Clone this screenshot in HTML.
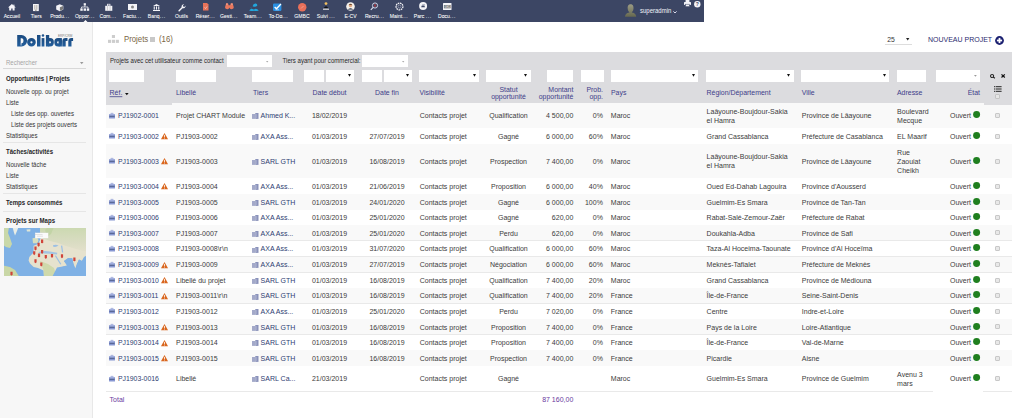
<!DOCTYPE html>
<html><head><meta charset="utf-8"><title>Projets</title>
<style>
html,body{margin:0;padding:0}
body{width:1024px;height:418px;overflow:hidden;position:relative;background:#fff;font-family:"Liberation Sans", sans-serif}
.t{position:absolute;white-space:nowrap;transform:scaleY(1.12)}
svg{overflow:visible}
</style></head><body>
<div style="position:absolute;left:0.00px;top:0.00px;width:704.00px;height:21.50px;background:#3c4664"></div>
<svg style="position:absolute;left:7.80px;top:4.20px" width="7.8" height="6.6" viewBox="0 0 7.8 6.6"><path d="M3.9 0 L7.8 3.4 L6.6 3.4 L6.6 6.6 L4.6 6.6 L4.6 4.6 L3.2 4.6 L3.2 6.6 L1.2 6.6 L1.2 3.4 L0 3.4 Z" fill="#f4f4f8"/><rect x="5.4" y="0.6" width="1" height="1.8" fill="#f4f4f8"/></svg>
<svg style="position:absolute;left:32.90px;top:3.70px" width="5.8" height="7.1" viewBox="0 0 5.8 7.1"><rect x="0" y="0" width="5.8" height="7.1" fill="#f4f4f8"/><rect x="1.6" y="1.0" width="0.6" height="4.6" fill="#8a8070"/><rect x="3.6" y="1.0" width="0.6" height="4.6" fill="#8a8070"/><rect x="2.4" y="5.6" width="1" height="1.5" fill="#8a8070"/></svg>
<svg style="position:absolute;left:56.30px;top:3.60px" width="7.5" height="7.5" viewBox="0 0 7.5 7.5"><path d="M3.75 0.2 L7.3 1.8 L7.3 5.6 L3.75 7.3 L0.2 5.6 L0.2 1.8 Z" fill="#f4f4f8"/><path d="M3.9 3.2 L7 2 L7 5.4 L3.9 6.8Z" fill="#7a7a7a"/></svg>
<svg style="position:absolute;left:80.00px;top:3.20px" width="9.5" height="8" viewBox="0 0 9.5 8"><rect x="3.7" y="0.2" width="2.2" height="2.3" fill="#f4f4f8"/><rect x="0.3" y="5.4" width="2.4" height="2.4" fill="#f4f4f8"/><rect x="3.6" y="5.4" width="2.4" height="2.4" fill="#f4f4f8"/><rect x="6.8" y="5.4" width="2.4" height="2.4" fill="#f4f4f8"/><path d="M4.8 2.5 V4 M1.5 5.4 V4 H8 V5.4" stroke="#f4f4f8" stroke-width="0.8" fill="none"/></svg>
<svg style="position:absolute;left:104.50px;top:3.60px" width="7.5" height="7" viewBox="0 0 7.5 7"><rect x="0.2" y="1.8" width="7.1" height="5" fill="#f4f4f8"/><rect x="2.5" y="0.2" width="2.5" height="1.8" fill="none" stroke="#f4f4f8" stroke-width="0.7"/><rect x="2.2" y="2" width="0.5" height="4.5" fill="#aaa"/><rect x="4.8" y="2" width="0.5" height="4.5" fill="#aaa"/></svg>
<svg style="position:absolute;left:128.30px;top:4.00px" width="9" height="6" viewBox="0 0 9 6"><rect x="0" y="0" width="9" height="6" fill="#f4f4f8"/><circle cx="4.5" cy="3" r="1.5" fill="#888"/></svg>
<svg style="position:absolute;left:153.30px;top:3.80px" width="7" height="7" viewBox="0 0 7 7"><path d="M3.5 0 L7 2 L0 2Z" fill="#f4f4f8"/><rect x="0.7" y="2.4" width="1.1" height="3.2" fill="#f4f4f8"/><rect x="2.95" y="2.4" width="1.1" height="3.2" fill="#f4f4f8"/><rect x="5.2" y="2.4" width="1.1" height="3.2" fill="#f4f4f8"/><rect x="0" y="6" width="7" height="1" fill="#f4f4f8"/></svg>
<svg style="position:absolute;left:177.50px;top:3.50px" width="8" height="8" viewBox="0 0 8 8"><path d="M7.6 1.6 A2.4 2.4 0 0 1 4.6 4.2 L1.4 7.4 A0.8 0.8 0 0 1 0.4 6.4 L3.6 3.2 A2.4 2.4 0 0 1 6.2 0.2 L4.9 1.5 L5.2 2.6 L6.3 2.9 Z" fill="#f4f4f8"/></svg>
<svg style="position:absolute;left:202.50px;top:3.00px" width="5.5" height="7.5" viewBox="0 0 5.5 7.5"><path d="M0 0 H4 L5.5 1.5 V7.5 H0Z" fill="#e8735a"/><path d="M1.5 4.5 L2.5 5.5 L4 3.5" stroke="#fff" stroke-width="0.5" fill="none"/></svg>
<svg style="position:absolute;left:224.90px;top:2.90px" width="8.8" height="6.6" viewBox="0 0 8.8 6.6"><path d="M1.2 0.3 L3 0.3 L3.6 2.2 H5.2 L5.8 0.3 H7.6 L8.8 4.2 A2.3 2.3 0 0 1 4.9 5.6 L4.4 4.4 L3.9 5.6 A2.3 2.3 0 0 1 0 4.2Z" fill="#e8785e"/><path d="M1.3 0.6 h1.2 v1.2 h-1.2Z M6.3 0.6 h1.2 v1.2 h-1.2Z" fill="#f2b0a0"/></svg>
<svg style="position:absolute;left:249.10px;top:2.60px" width="10" height="8.4" viewBox="0 0 10 8.4"><path d="M3.6 3.2 Q4.2 0.2 6.6 0.4 Q8.6 0.6 8.2 2.8 Q6.4 4.6 3.6 3.2Z" fill="#22a6dc"/><path d="M0.2 7.4 Q1.8 5 4.2 6.2 Q5 6.6 5 6.6 Q7.2 4.8 9.8 7.4 Q7 8.6 5 7.8 Q3 8.6 0.2 7.4Z" fill="#22a6dc"/><path d="M1.5 4.5 L3 5.5" stroke="#1a7fb0" stroke-width="0.5"/></svg>
<svg style="position:absolute;left:273.20px;top:3.10px" width="8.8" height="8" viewBox="0 0 8.8 8"><rect x="0" y="0.4" width="8.4" height="7.6" rx="1.2" fill="#2a90e2"/><path d="M1.6 4.0 L3.5 5.8 L7.9 1.0" stroke="#fff" stroke-width="1.3" fill="none"/><rect x="2.4" y="6.5" width="3.6" height="0.7" fill="#d8e8f8"/></svg>
<svg style="position:absolute;left:298.00px;top:3.00px" width="8.5" height="8.5" viewBox="0 0 8.5 8.5"><circle cx="4.25" cy="4.25" r="4.2" fill="#e8705a"/><path d="M3 5.5 L5.5 3" stroke="#f7c0b0" stroke-width="0.6"/></svg>
<svg style="position:absolute;left:322.50px;top:2.20px" width="6" height="8" viewBox="0 0 6 8"><circle cx="3" cy="1.6" r="1.4" fill="#f2c060"/><path d="M0.8 6 Q3 2.5 5.2 6Z" fill="#111"/><rect x="0" y="6.6" width="6" height="1.3" fill="#ccc"/></svg>
<svg style="position:absolute;left:346.00px;top:1.80px" width="9" height="9" viewBox="0 0 9 9"><circle cx="4.5" cy="4.5" r="4.3" fill="#f4f0ea"/><circle cx="4.5" cy="3.6" r="1.7" fill="#e0a880"/><path d="M2.7 3 Q4.5 0.6 6.3 3" fill="#6b4a30"/><path d="M1.6 7.8 Q4.5 4.4 7.4 7.8Z" fill="#5a6070"/></svg>
<svg style="position:absolute;left:370.30px;top:1.80px" width="8.5" height="8.5" viewBox="0 0 8.5 8.5"><circle cx="5" cy="3.5" r="2.6" fill="none" stroke="#dde" stroke-width="0.9"/><rect x="4.4" y="2.3" width="1.2" height="2.4" fill="#c33"/><path d="M3.2 5.3 L0.8 7.8" stroke="#dde" stroke-width="1.1"/></svg>
<svg style="position:absolute;left:394.50px;top:2.40px" width="9" height="9" viewBox="0 0 9 9"><circle cx="4.5" cy="4.5" r="3.4" fill="none" stroke="#f4f4f8" stroke-width="1.3" stroke-dasharray="1.6 0.7"/><circle cx="4.5" cy="4.5" r="1.5" fill="none" stroke="#ccd" stroke-width="0.5"/></svg>
<svg style="position:absolute;left:418.90px;top:2.10px" width="8.2" height="8.2" viewBox="0 0 8.2 8.2"><circle cx="4.1" cy="4.1" r="4.0" fill="#f4f4f8"/><path d="M2.2 5.2 L2.8 3.4 H5.4 L6 5.2Z" fill="#3c4664"/><rect x="3.2" y="2.5" width="2.8" height="0.6" fill="#7a8098"/></svg>
<svg style="position:absolute;left:442.50px;top:3.00px" width="8.5" height="7" viewBox="0 0 8.5 7"><rect x="0" y="0" width="8.5" height="7" rx="0.6" fill="#f4f4f8"/><rect x="0.9" y="2" width="6.7" height="3.3" fill="#666"/><text x="4.25" y="4.8" font-size="2.8" text-anchor="middle" fill="#fff" font-family="Liberation Sans">GED</text></svg>
<svg style="position:absolute;left:82.50px;top:19.50px" width="5" height="2.5" viewBox="0 0 5 2.5"><path d="M0 2.5 L2.5 0 L5 2.5Z" fill="#fff"/></svg>
<svg style="position:absolute;left:625.20px;top:3.60px" width="11.2" height="13" viewBox="0 0 11.2 13"><defs><linearGradient id="ug" x1="0" y1="0" x2="0" y2="1"><stop offset="0" stop-color="#9c9c84"/><stop offset="1" stop-color="#66684f"/></linearGradient></defs><path d="M5.6 0.2 C8.2 0.2 8.6 2.5 8.5 4.6 C8.4 6.8 7.4 7.8 6.8 8.2 L6.8 8.6 C10 9.2 11 10.6 11.2 12.8 H0 C0.2 10.6 1.2 9.2 4.4 8.6 L4.4 8.2 C3.8 7.8 2.8 6.8 2.7 4.6 C2.6 2.5 3 0.2 5.6 0.2Z" fill="url(#ug)"/></svg>
<svg style="position:absolute;left:673.00px;top:10.60px" width="4" height="3" viewBox="0 0 4 3"><path d="M0.4 0.4 L2 2 L3.6 0.4" stroke="#eef" stroke-width="0.9" fill="none"/></svg>
<svg style="position:absolute;left:683.80px;top:0.20px" width="7" height="6.8" viewBox="0 0 7 6.8"><rect x="1.6" y="0" width="3.8" height="2" fill="#f4f4f8"/><rect x="0" y="2" width="7" height="2.9" rx="0.6" fill="#f4f4f8"/><rect x="1.6" y="4.2" width="3.8" height="2.4" fill="#f4f4f8" stroke="#3c4664" stroke-width="0.5"/></svg>
<svg style="position:absolute;left:693.60px;top:0.60px" width="6.6" height="6.6" viewBox="0 0 6.6 6.6"><circle cx="3.3" cy="3.3" r="3.2" fill="#f4f4f8"/><text x="3.3" y="5.3" font-size="5" font-weight="bold" text-anchor="middle" fill="#3c4664" font-family="Liberation Sans">?</text></svg>
<div style="position:absolute;left:0.00px;top:21.50px;width:92.00px;height:396.50px;background:#f7f7f7;border-right:1px solid #e8e8e8"></div>
<svg style="position:absolute;left:16.8px;top:34.8px" width="56.2" height="11.5" viewBox="0 0 56.2 11.5"><defs><linearGradient id="lg" x1="0" y1="0" x2="0" y2="1"><stop offset="0" stop-color="#1b4b80"/><stop offset="1" stop-color="#235e9c"/></linearGradient></defs><g fill="url(#lg)" fill-rule="evenodd"><path d="M0.2 0 H4.5 A5.6 5.75 0 0 1 4.5 11.5 H0.2Z M3.7 3.2 H5 A1.5 2.5 0 0 1 5 8.2 H3.7Z"/><path d="M10.1 7.3 A4.35 4.2 0 1 0 18.8 7.3 A4.35 4.2 0 1 0 10.1 7.3Z M13.35 7.3 A1.1 1.1 0 1 0 15.55 7.3 A1.1 1.1 0 1 0 13.35 7.3Z"/><rect x="20" y="0" width="3.5" height="11.5"/><rect x="24.6" y="3.1" width="2.8" height="8.4"/><circle cx="26" cy="0.5" r="1.25"/><rect x="28.9" y="0" width="3.3" height="11.5"/><path d="M28.9 7.3 A4 4.2 0 1 0 36.9 7.3 A4 4.2 0 1 0 28.9 7.3Z M31.8 7.3 A1.1 1.1 0 1 0 34 7.3 A1.1 1.1 0 1 0 31.8 7.3Z"/><path d="M37.3 7.3 A3.8 4.2 0 1 0 44.9 7.3 A3.8 4.2 0 1 0 37.3 7.3Z M40.1 7.4 A1.1 1.1 0 1 0 42.3 7.4 A1.1 1.1 0 1 0 40.1 7.4Z"/><rect x="41.6" y="3.1" width="3.3" height="8.4"/><path d="M45.3 11.5 V6.5 Q45.3 3.1 48.7 3.1 H50.5 V6 H48.7 V11.5Z"/><path d="M51.3 11.5 V6.5 Q51.3 3.1 54.5 3.1 H56.1 V6 H54.5 V11.5Z"/></g><rect x="3.7" y="7.9" width="0.7" height="2.6" fill="#f6f6f6"/></svg>
<svg style="position:absolute;left:58.2px;top:33.6px" width="15" height="2.8" viewBox="0 0 15 2.8"><text x="0" y="2.6" font-size="3.1" fill="#7a7a7a" font-family="Liberation Sans" textLength="14.5" lengthAdjust="spacingAndGlyphs">ERP/CRM</text></svg>
<svg style="position:absolute;left:79.90px;top:62.00px" width="3.5" height="2.4" viewBox="0 0 3.5 2.4"><path d="M0 0 H3.5 L1.75 2.2Z" fill="#999"/></svg>
<div style="position:absolute;left:3.00px;top:68.30px;width:83.00px;height:0.60px;background:#d8d8d8"></div>
<div style="position:absolute;left:3.00px;top:142.30px;width:83.00px;height:0.70px;background:#e6e6e6"></div>
<div style="position:absolute;left:3.00px;top:193.00px;width:83.00px;height:0.70px;background:#e6e6e6"></div>
<div style="position:absolute;left:3.00px;top:211.30px;width:83.00px;height:0.70px;background:#e6e6e6"></div>
<svg style="position:absolute;left:3.5px;top:228.2px;overflow:hidden" width="82.5" height="48.2" viewBox="0 0 82.5 48.2">
<defs><filter id="mb" x="-5%" y="-5%" width="110%" height="110%"><feGaussianBlur stdDeviation="0.35"/></filter>
<linearGradient id="eu" x1="0" y1="0" x2="0" y2="1"><stop offset="0" stop-color="#cbd9b0"/><stop offset="0.6" stop-color="#d9dcc2"/><stop offset="1" stop-color="#e4e0cc"/></linearGradient></defs>
<g filter="url(#mb)">
<rect x="-1" y="-1" width="84.5" height="50.2" fill="#7fb1e5"/>
<path d="M-1 -1 H5 L4 5 L6 10 L8 16 L6 20 L2 19 L-1 17Z" fill="#c9d8aa"/>
<path d="M8.5 -1 H14.5 L13 3 L11 7.5 L9.8 4Z" fill="#e9ede6"/>
<path d="M22.5 1.5 L26.5 1.3 L26.2 3.4 L23 3.4Z" fill="#dfe6d6"/>
<path d="M-1 37.6 L6 39 L11 42 L15.5 49.2 H-1Z" fill="#c9d7a6"/>
<path d="M28.5 10.2 L33 9.5 L34.6 12 L33.5 15.2 L29 15.2Z" fill="#d6dfbf"/>
<path d="M36 -1 H83.5 V27 L80 29 L78 33 L75 31.5 L73 36 L71.3 40.7 L69.5 36 L68.2 30.2 L64 30 L60 33 L63.2 37.6 L58 39 L53 49.2 H40 L39.6 42.6 L34 40 L29.6 38.9 L26 35.5 L24.6 32.6 L25.3 29 L29.5 24.6 L29.6 17.7 L34 16 L36 12 L37 8 L36 3Z" fill="#e6e2ce"/>
<path d="M36 -1 H83.5 V24 L72 21 L62 18 L54 15 L46 13 L38 10 L36 3Z" fill="url(#eu)"/>
<path d="M36 33 L44 36 L50 40 L53 49.2 H40 L39.6 42.6Z" fill="#cfd9ab"/>
<path d="M41 2 L44 -1 H50 L47 6 L43 9Z" fill="#c2d4a6"/>
<path d="M34.6 24 Q40 22.5 46 23.5 L53.3 24.8 L53 26.5 L46 25.8 Q40 25.3 35 25.3Z" fill="#a4c4e2"/>
<path d="M49 17.2 Q52 16 54.5 17.5 Q52 19.6 49 18.6Z" fill="#9cc0e4"/>
<path d="M57 17.7 L58.2 17.5 L59.2 24.6 L58 24.5Z" fill="#9cc0e4"/>
<path d="M50.8 27.7 L52 27.5 L57.3 36 L56.3 36.6Z" fill="#9cc0e4"/>
<path d="M48 49.2 L53 39.5 L58.5 38.5 L63.2 37.6 L60 33 L64 30.5 L68.2 30.2 L69.5 36 L71.3 40.7 L73 36 L75 31.5 L78 33 L80 30 L83.5 30 V49.2Z" fill="#7fb1e5"/>
</g>
<rect x="31.1" y="4.9" width="13.1" height="5.3" fill="#fbfbfb" stroke="#ddd" stroke-width="0.2"/>
<path d="M30.5 6.5 h8 M33 8.2 h6" stroke="#bbb" stroke-width="0.4"/>
<g fill="#d0443a">
<path d="M37.0 11.4 h2.2 v2.9 l-1.1 1.1 l-1.1 -1.1Z"/>
<path d="M33.5 14.8 h2.2 v2.9 l-1.1 1.1 l-1.1 -1.1Z"/>
<path d="M30.4 18.6 h2.2 v2.9 l-1.1 1.1 l-1.1 -1.1Z"/>
<path d="M29.1 23.2 h2.2 v2.9 l-1.1 1.1 l-1.1 -1.1Z"/>
<path d="M37.0 21.9 h2.2 v2.9 l-1.1 1.1 l-1.1 -1.1Z"/>
<path d="M33.9 25.4 h2.2 v2.9 l-1.1 1.1 l-1.1 -1.1Z"/>
<path d="M40.7 26.9 h2.2 v2.9 l-1.1 1.1 l-1.1 -1.1Z"/>
<path d="M46.9 25.9 h2.2 v2.9 l-1.1 1.1 l-1.1 -1.1Z"/>
<path d="M56.9 26.3 h2.2 v2.9 l-1.1 1.1 l-1.1 -1.1Z"/>
<path d="M69.3 29.4 h2.2 v2.9 l-1.1 1.1 l-1.1 -1.1Z"/>
<path d="M30.4 31.3 h2.2 v2.9 l-1.1 1.1 l-1.1 -1.1Z"/>
<path d="M36.2 34.6 h2.2 v2.9 l-1.1 1.1 l-1.1 -1.1Z"/>
<path d="M6.4 43.7 h2.2 v2.9 l-1.1 1.1 l-1.1 -1.1Z"/>
</g></svg>
<svg style="position:absolute;left:107.80px;top:35.00px" width="11" height="8" viewBox="0 0 11 8"><g fill="#cdcdcd"><rect x="3.9" y="0" width="3.1" height="3"/><rect x="0" y="4.8" width="3.1" height="3.1"/><rect x="3.9" y="4.8" width="3.1" height="3.1"/><rect x="7.8" y="4.8" width="3.1" height="3.1"/></g></svg>
<div style="position:absolute;left:150.20px;top:37.20px;width:4.50px;height:4.60px;background:#c8c8c8"></div>
<svg style="position:absolute;left:905.70px;top:37.60px" width="4" height="3" viewBox="0 0 4 3"><path d="M0 0 H3.4 L1.7 2.6Z" fill="#222"/></svg>
<div style="position:absolute;left:885.00px;top:44.20px;width:27.00px;height:0.50px;background:#ddd"></div>
<svg style="position:absolute;left:995.40px;top:35.60px" width="9" height="9" viewBox="0 0 9 9"><circle cx="4.5" cy="4.5" r="4.4" fill="#1a1f70"/><rect x="1.9" y="3.6" width="5.2" height="1.8" fill="#fff"/><rect x="3.6" y="1.9" width="1.8" height="5.2" fill="#fff"/></svg>
<div style="position:absolute;left:105.80px;top:52.00px;width:906.20px;height:51.40px;background:#dcdcdf"></div>
<div style="position:absolute;left:226.70px;top:55.40px;width:45.50px;height:11.70px;background:#fff"></div>
<svg style="position:absolute;left:266.00px;top:60.80px" width="3" height="2" viewBox="0 0 3 2"><path d="M0 0 H2.4 L1.2 1.4Z" fill="#aaa"/></svg>
<div style="position:absolute;left:361.90px;top:55.40px;width:46.00px;height:11.70px;background:#fff"></div>
<svg style="position:absolute;left:402.00px;top:60.80px" width="3" height="2" viewBox="0 0 3 2"><path d="M0 0 H2.4 L1.2 1.4Z" fill="#aaa"/></svg>
<div style="position:absolute;left:109.00px;top:70.00px;width:35.00px;height:11.60px;background:#fff"></div>
<div style="position:absolute;left:176.00px;top:70.00px;width:40.00px;height:11.60px;background:#fff"></div>
<div style="position:absolute;left:252.30px;top:70.00px;width:41.00px;height:11.60px;background:#fff"></div>
<div style="position:absolute;left:304.00px;top:70.00px;width:19.80px;height:11.60px;background:#fff"></div>
<div style="position:absolute;left:325.70px;top:70.00px;width:28.30px;height:11.60px;background:#fff"></div>
<svg style="position:absolute;left:347.80px;top:74.00px" width="4" height="3.2" viewBox="0 0 4 3.2"><path d="M0 0 H3 L1.5 2.8Z" fill="#111"/></svg>
<div style="position:absolute;left:361.90px;top:70.00px;width:19.90px;height:11.60px;background:#fff"></div>
<div style="position:absolute;left:383.50px;top:70.00px;width:28.50px;height:11.60px;background:#fff"></div>
<svg style="position:absolute;left:405.80px;top:74.00px" width="4" height="3.2" viewBox="0 0 4 3.2"><path d="M0 0 H3 L1.5 2.8Z" fill="#111"/></svg>
<div style="position:absolute;left:418.90px;top:70.00px;width:60.10px;height:11.60px;background:#fff"></div>
<svg style="position:absolute;left:472.80px;top:74.00px" width="4" height="3.2" viewBox="0 0 4 3.2"><path d="M0 0 H3 L1.5 2.8Z" fill="#111"/></svg>
<div style="position:absolute;left:486.00px;top:70.00px;width:44.60px;height:11.60px;background:#fff"></div>
<svg style="position:absolute;left:524.40px;top:74.00px" width="4" height="3.2" viewBox="0 0 4 3.2"><path d="M0 0 H3 L1.5 2.8Z" fill="#111"/></svg>
<div style="position:absolute;left:547.00px;top:70.00px;width:26.40px;height:11.60px;background:#fff"></div>
<div style="position:absolute;left:580.80px;top:70.00px;width:23.10px;height:11.60px;background:#fff"></div>
<div style="position:absolute;left:610.50px;top:70.00px;width:87.50px;height:11.60px;background:#fff"></div>
<svg style="position:absolute;left:691.80px;top:74.00px" width="4" height="3.2" viewBox="0 0 4 3.2"><path d="M0 0 H3 L1.5 2.8Z" fill="#111"/></svg>
<div style="position:absolute;left:706.00px;top:70.00px;width:87.50px;height:11.60px;background:#fff"></div>
<svg style="position:absolute;left:787.30px;top:74.00px" width="4" height="3.2" viewBox="0 0 4 3.2"><path d="M0 0 H3 L1.5 2.8Z" fill="#111"/></svg>
<div style="position:absolute;left:801.00px;top:70.00px;width:88.00px;height:11.60px;background:#fff"></div>
<svg style="position:absolute;left:882.80px;top:74.00px" width="4" height="3.2" viewBox="0 0 4 3.2"><path d="M0 0 H3 L1.5 2.8Z" fill="#111"/></svg>
<div style="position:absolute;left:896.80px;top:70.00px;width:28.80px;height:11.60px;background:#fff"></div>
<div style="position:absolute;left:936.00px;top:70.00px;width:44.00px;height:11.60px;background:#fff"></div>
<svg style="position:absolute;left:974.00px;top:75.10px" width="3" height="2" viewBox="0 0 3 2"><path d="M0 0 H2.8 L1.4 1.8Z" fill="#999"/></svg>
<svg style="position:absolute;left:990.10px;top:73.60px" width="5.4" height="4.4" viewBox="0 0 5.4 4.4"><circle cx="2.1" cy="2.0" r="1.55" fill="none" stroke="#222" stroke-width="1.05"/><path d="M3.2 3.0 L4.9 4.3" stroke="#222" stroke-width="1.1"/></svg>
<svg style="position:absolute;left:1001.10px;top:74.00px" width="4.3" height="3.9" viewBox="0 0 4.3 3.9"><path d="M0.5 0.4 L3.8 3.5 M3.8 0.4 L0.5 3.5" stroke="#111" stroke-width="1.25"/></svg>
<svg style="position:absolute;left:124.50px;top:92.50px" width="4" height="2.5" viewBox="0 0 4 2.5"><path d="M0 0 H3.6 L1.8 2.2Z" fill="#111"/></svg>
<svg style="position:absolute;left:993.50px;top:86.10px" width="7.6" height="6" viewBox="0 0 7.6 6"><g fill="#222"><rect x="0" y="0.2" width="1" height="1"/><rect x="0" y="2.5" width="1" height="1"/><rect x="0" y="4.8" width="1" height="1"/><rect x="1.6" y="0.2" width="6" height="1"/><rect x="1.6" y="2.5" width="6" height="1"/><rect x="1.6" y="4.8" width="6" height="1"/></g></svg>
<div style="position:absolute;left:995.40px;top:94.40px;width:4.60px;height:5.00px;background:#e6e6e6;border:0.7px solid #c4c4c4;box-sizing:border-box;border-radius:1px"></div>
<div style="position:absolute;left:105.80px;top:103.40px;width:906.20px;height:24.70px;background:#f9f9f9"></div>
<div style="position:absolute;left:105.80px;top:127.60px;width:906.20px;height:1.00px;background:#e9e9e9"></div>
<svg style="position:absolute;left:109.10px;top:112.77px" width="6" height="5.6" viewBox="0 0 6 5.6"><rect x="0" y="1.1" width="6" height="4.5" rx="0.5" fill="#8797d2"/><rect x="2" y="0.2" width="2" height="1.2" fill="none" stroke="#8797d2" stroke-width="0.6"/><rect x="0.4" y="2.8" width="5.2" height="0.8" fill="#3c4c72"/><rect x="0.4" y="1.6" width="5.2" height="0.6" fill="#c8d2f0"/></svg>
<svg style="position:absolute;left:252.40px;top:113.47px" width="6.6" height="5.9" viewBox="0 0 6.6 5.9"><rect x="0" y="1.0" width="3.1" height="4.9" fill="#a3a9c9"/><rect x="3.3" y="0" width="3.2" height="5.9" fill="#8a92ba"/><rect x="4.3" y="1" width="0.5" height="4" fill="#b4b9d6"/></svg>
<svg style="position:absolute;left:973.30px;top:111.38px" width="7.2" height="7.2" viewBox="0 0 7.2 7.2"><circle cx="3.6" cy="3.6" r="3.5" fill="#1f7f1f"/></svg>
<div style="position:absolute;left:995.00px;top:113.08px;width:5.00px;height:5.00px;background:#e8e8e8;border:0.7px solid #c8c8c8;box-sizing:border-box;border-radius:1px"></div>
<div style="position:absolute;left:105.80px;top:128.10px;width:906.20px;height:16.10px;background:#fff"></div>
<div style="position:absolute;left:105.80px;top:143.70px;width:906.20px;height:1.00px;background:#e9e9e9"></div>
<svg style="position:absolute;left:109.10px;top:133.25px" width="6" height="5.6" viewBox="0 0 6 5.6"><rect x="0" y="1.1" width="6" height="4.5" rx="0.5" fill="#8797d2"/><rect x="2" y="0.2" width="2" height="1.2" fill="none" stroke="#8797d2" stroke-width="0.6"/><rect x="0.4" y="2.8" width="5.2" height="0.8" fill="#3c4c72"/><rect x="0.4" y="1.6" width="5.2" height="0.6" fill="#c8d2f0"/></svg>
<svg style="position:absolute;left:160.90px;top:133.15px" width="7" height="6.2" viewBox="0 0 7 6.2"><path d="M3.5 0 L7 6.2 L0 6.2Z" fill="#d9661e"/><rect x="3.1" y="1.9" width="0.8" height="2.3" fill="#fff"/><rect x="3.1" y="4.7" width="0.8" height="0.8" fill="#fff"/></svg>
<svg style="position:absolute;left:252.40px;top:133.95px" width="6.6" height="5.9" viewBox="0 0 6.6 5.9"><rect x="0" y="1.0" width="3.1" height="4.9" fill="#a3a9c9"/><rect x="3.3" y="0" width="3.2" height="5.9" fill="#8a92ba"/><rect x="4.3" y="1" width="0.5" height="4" fill="#b4b9d6"/></svg>
<svg style="position:absolute;left:973.30px;top:131.85px" width="7.2" height="7.2" viewBox="0 0 7.2 7.2"><circle cx="3.6" cy="3.6" r="3.5" fill="#1f7f1f"/></svg>
<div style="position:absolute;left:995.00px;top:133.55px;width:5.00px;height:5.00px;background:#e8e8e8;border:0.7px solid #c8c8c8;box-sizing:border-box;border-radius:1px"></div>
<div style="position:absolute;left:105.80px;top:144.20px;width:906.20px;height:34.20px;background:#f9f9f9"></div>
<div style="position:absolute;left:105.80px;top:177.90px;width:906.20px;height:1.00px;background:#e9e9e9"></div>
<svg style="position:absolute;left:109.10px;top:158.40px" width="6" height="5.6" viewBox="0 0 6 5.6"><rect x="0" y="1.1" width="6" height="4.5" rx="0.5" fill="#8797d2"/><rect x="2" y="0.2" width="2" height="1.2" fill="none" stroke="#8797d2" stroke-width="0.6"/><rect x="0.4" y="2.8" width="5.2" height="0.8" fill="#3c4c72"/><rect x="0.4" y="1.6" width="5.2" height="0.6" fill="#c8d2f0"/></svg>
<svg style="position:absolute;left:160.90px;top:158.30px" width="7" height="6.2" viewBox="0 0 7 6.2"><path d="M3.5 0 L7 6.2 L0 6.2Z" fill="#d9661e"/><rect x="3.1" y="1.9" width="0.8" height="2.3" fill="#fff"/><rect x="3.1" y="4.7" width="0.8" height="0.8" fill="#fff"/></svg>
<svg style="position:absolute;left:252.40px;top:159.10px" width="6.6" height="5.9" viewBox="0 0 6.6 5.9"><rect x="0" y="1.0" width="3.1" height="4.9" fill="#a3a9c9"/><rect x="3.3" y="0" width="3.2" height="5.9" fill="#8a92ba"/><rect x="4.3" y="1" width="0.5" height="4" fill="#b4b9d6"/></svg>
<svg style="position:absolute;left:973.30px;top:157.00px" width="7.2" height="7.2" viewBox="0 0 7.2 7.2"><circle cx="3.6" cy="3.6" r="3.5" fill="#1f7f1f"/></svg>
<div style="position:absolute;left:995.00px;top:158.70px;width:5.00px;height:5.00px;background:#e8e8e8;border:0.7px solid #c8c8c8;box-sizing:border-box;border-radius:1px"></div>
<div style="position:absolute;left:105.80px;top:178.40px;width:906.20px;height:15.90px;background:#fff"></div>
<div style="position:absolute;left:105.80px;top:193.80px;width:906.20px;height:1.00px;background:#e9e9e9"></div>
<svg style="position:absolute;left:109.10px;top:183.45px" width="6" height="5.6" viewBox="0 0 6 5.6"><rect x="0" y="1.1" width="6" height="4.5" rx="0.5" fill="#8797d2"/><rect x="2" y="0.2" width="2" height="1.2" fill="none" stroke="#8797d2" stroke-width="0.6"/><rect x="0.4" y="2.8" width="5.2" height="0.8" fill="#3c4c72"/><rect x="0.4" y="1.6" width="5.2" height="0.6" fill="#c8d2f0"/></svg>
<svg style="position:absolute;left:160.90px;top:183.35px" width="7" height="6.2" viewBox="0 0 7 6.2"><path d="M3.5 0 L7 6.2 L0 6.2Z" fill="#d9661e"/><rect x="3.1" y="1.9" width="0.8" height="2.3" fill="#fff"/><rect x="3.1" y="4.7" width="0.8" height="0.8" fill="#fff"/></svg>
<svg style="position:absolute;left:252.40px;top:184.15px" width="6.6" height="5.9" viewBox="0 0 6.6 5.9"><rect x="0" y="1.0" width="3.1" height="4.9" fill="#a3a9c9"/><rect x="3.3" y="0" width="3.2" height="5.9" fill="#8a92ba"/><rect x="4.3" y="1" width="0.5" height="4" fill="#b4b9d6"/></svg>
<svg style="position:absolute;left:973.30px;top:182.05px" width="7.2" height="7.2" viewBox="0 0 7.2 7.2"><circle cx="3.6" cy="3.6" r="3.5" fill="#1f7f1f"/></svg>
<div style="position:absolute;left:995.00px;top:183.75px;width:5.00px;height:5.00px;background:#e8e8e8;border:0.7px solid #c8c8c8;box-sizing:border-box;border-radius:1px"></div>
<div style="position:absolute;left:105.80px;top:194.30px;width:906.20px;height:15.80px;background:#f9f9f9"></div>
<div style="position:absolute;left:105.80px;top:209.60px;width:906.20px;height:1.00px;background:#e9e9e9"></div>
<svg style="position:absolute;left:109.10px;top:199.30px" width="6" height="5.6" viewBox="0 0 6 5.6"><rect x="0" y="1.1" width="6" height="4.5" rx="0.5" fill="#8797d2"/><rect x="2" y="0.2" width="2" height="1.2" fill="none" stroke="#8797d2" stroke-width="0.6"/><rect x="0.4" y="2.8" width="5.2" height="0.8" fill="#3c4c72"/><rect x="0.4" y="1.6" width="5.2" height="0.6" fill="#c8d2f0"/></svg>
<svg style="position:absolute;left:252.40px;top:200.00px" width="6.6" height="5.9" viewBox="0 0 6.6 5.9"><rect x="0" y="1.0" width="3.1" height="4.9" fill="#a3a9c9"/><rect x="3.3" y="0" width="3.2" height="5.9" fill="#8a92ba"/><rect x="4.3" y="1" width="0.5" height="4" fill="#b4b9d6"/></svg>
<svg style="position:absolute;left:973.30px;top:197.90px" width="7.2" height="7.2" viewBox="0 0 7.2 7.2"><circle cx="3.6" cy="3.6" r="3.5" fill="#1f7f1f"/></svg>
<div style="position:absolute;left:995.00px;top:199.60px;width:5.00px;height:5.00px;background:#e8e8e8;border:0.7px solid #c8c8c8;box-sizing:border-box;border-radius:1px"></div>
<div style="position:absolute;left:105.80px;top:210.10px;width:906.20px;height:15.10px;background:#fff"></div>
<div style="position:absolute;left:105.80px;top:224.70px;width:906.20px;height:1.00px;background:#e9e9e9"></div>
<svg style="position:absolute;left:109.10px;top:214.75px" width="6" height="5.6" viewBox="0 0 6 5.6"><rect x="0" y="1.1" width="6" height="4.5" rx="0.5" fill="#8797d2"/><rect x="2" y="0.2" width="2" height="1.2" fill="none" stroke="#8797d2" stroke-width="0.6"/><rect x="0.4" y="2.8" width="5.2" height="0.8" fill="#3c4c72"/><rect x="0.4" y="1.6" width="5.2" height="0.6" fill="#c8d2f0"/></svg>
<svg style="position:absolute;left:252.40px;top:215.45px" width="6.6" height="5.9" viewBox="0 0 6.6 5.9"><rect x="0" y="1.0" width="3.1" height="4.9" fill="#a3a9c9"/><rect x="3.3" y="0" width="3.2" height="5.9" fill="#8a92ba"/><rect x="4.3" y="1" width="0.5" height="4" fill="#b4b9d6"/></svg>
<svg style="position:absolute;left:973.30px;top:213.35px" width="7.2" height="7.2" viewBox="0 0 7.2 7.2"><circle cx="3.6" cy="3.6" r="3.5" fill="#1f7f1f"/></svg>
<div style="position:absolute;left:995.00px;top:215.05px;width:5.00px;height:5.00px;background:#e8e8e8;border:0.7px solid #c8c8c8;box-sizing:border-box;border-radius:1px"></div>
<div style="position:absolute;left:105.80px;top:225.20px;width:906.20px;height:15.70px;background:#f9f9f9"></div>
<div style="position:absolute;left:105.80px;top:240.40px;width:906.20px;height:1.00px;background:#e9e9e9"></div>
<svg style="position:absolute;left:109.10px;top:230.15px" width="6" height="5.6" viewBox="0 0 6 5.6"><rect x="0" y="1.1" width="6" height="4.5" rx="0.5" fill="#8797d2"/><rect x="2" y="0.2" width="2" height="1.2" fill="none" stroke="#8797d2" stroke-width="0.6"/><rect x="0.4" y="2.8" width="5.2" height="0.8" fill="#3c4c72"/><rect x="0.4" y="1.6" width="5.2" height="0.6" fill="#c8d2f0"/></svg>
<svg style="position:absolute;left:252.40px;top:230.85px" width="6.6" height="5.9" viewBox="0 0 6.6 5.9"><rect x="0" y="1.0" width="3.1" height="4.9" fill="#a3a9c9"/><rect x="3.3" y="0" width="3.2" height="5.9" fill="#8a92ba"/><rect x="4.3" y="1" width="0.5" height="4" fill="#b4b9d6"/></svg>
<svg style="position:absolute;left:973.30px;top:228.75px" width="7.2" height="7.2" viewBox="0 0 7.2 7.2"><circle cx="3.6" cy="3.6" r="3.5" fill="#1f7f1f"/></svg>
<div style="position:absolute;left:995.00px;top:230.45px;width:5.00px;height:5.00px;background:#e8e8e8;border:0.7px solid #c8c8c8;box-sizing:border-box;border-radius:1px"></div>
<div style="position:absolute;left:105.80px;top:240.90px;width:906.20px;height:15.60px;background:#fff"></div>
<div style="position:absolute;left:105.80px;top:256.00px;width:906.20px;height:1.00px;background:#e9e9e9"></div>
<svg style="position:absolute;left:109.10px;top:245.80px" width="6" height="5.6" viewBox="0 0 6 5.6"><rect x="0" y="1.1" width="6" height="4.5" rx="0.5" fill="#8797d2"/><rect x="2" y="0.2" width="2" height="1.2" fill="none" stroke="#8797d2" stroke-width="0.6"/><rect x="0.4" y="2.8" width="5.2" height="0.8" fill="#3c4c72"/><rect x="0.4" y="1.6" width="5.2" height="0.6" fill="#c8d2f0"/></svg>
<svg style="position:absolute;left:252.40px;top:246.50px" width="6.6" height="5.9" viewBox="0 0 6.6 5.9"><rect x="0" y="1.0" width="3.1" height="4.9" fill="#a3a9c9"/><rect x="3.3" y="0" width="3.2" height="5.9" fill="#8a92ba"/><rect x="4.3" y="1" width="0.5" height="4" fill="#b4b9d6"/></svg>
<svg style="position:absolute;left:973.30px;top:244.40px" width="7.2" height="7.2" viewBox="0 0 7.2 7.2"><circle cx="3.6" cy="3.6" r="3.5" fill="#1f7f1f"/></svg>
<div style="position:absolute;left:995.00px;top:246.10px;width:5.00px;height:5.00px;background:#e8e8e8;border:0.7px solid #c8c8c8;box-sizing:border-box;border-radius:1px"></div>
<div style="position:absolute;left:105.80px;top:256.50px;width:906.20px;height:16.20px;background:#f9f9f9"></div>
<div style="position:absolute;left:105.80px;top:272.20px;width:906.20px;height:1.00px;background:#e9e9e9"></div>
<svg style="position:absolute;left:109.10px;top:261.70px" width="6" height="5.6" viewBox="0 0 6 5.6"><rect x="0" y="1.1" width="6" height="4.5" rx="0.5" fill="#8797d2"/><rect x="2" y="0.2" width="2" height="1.2" fill="none" stroke="#8797d2" stroke-width="0.6"/><rect x="0.4" y="2.8" width="5.2" height="0.8" fill="#3c4c72"/><rect x="0.4" y="1.6" width="5.2" height="0.6" fill="#c8d2f0"/></svg>
<svg style="position:absolute;left:160.90px;top:261.60px" width="7" height="6.2" viewBox="0 0 7 6.2"><path d="M3.5 0 L7 6.2 L0 6.2Z" fill="#d9661e"/><rect x="3.1" y="1.9" width="0.8" height="2.3" fill="#fff"/><rect x="3.1" y="4.7" width="0.8" height="0.8" fill="#fff"/></svg>
<svg style="position:absolute;left:252.40px;top:262.40px" width="6.6" height="5.9" viewBox="0 0 6.6 5.9"><rect x="0" y="1.0" width="3.1" height="4.9" fill="#a3a9c9"/><rect x="3.3" y="0" width="3.2" height="5.9" fill="#8a92ba"/><rect x="4.3" y="1" width="0.5" height="4" fill="#b4b9d6"/></svg>
<svg style="position:absolute;left:973.30px;top:260.30px" width="7.2" height="7.2" viewBox="0 0 7.2 7.2"><circle cx="3.6" cy="3.6" r="3.5" fill="#1f7f1f"/></svg>
<div style="position:absolute;left:995.00px;top:262.00px;width:5.00px;height:5.00px;background:#e8e8e8;border:0.7px solid #c8c8c8;box-sizing:border-box;border-radius:1px"></div>
<div style="position:absolute;left:105.80px;top:272.70px;width:906.20px;height:15.30px;background:#fff"></div>
<div style="position:absolute;left:105.80px;top:287.50px;width:906.20px;height:1.00px;background:#e9e9e9"></div>
<svg style="position:absolute;left:109.10px;top:277.45px" width="6" height="5.6" viewBox="0 0 6 5.6"><rect x="0" y="1.1" width="6" height="4.5" rx="0.5" fill="#8797d2"/><rect x="2" y="0.2" width="2" height="1.2" fill="none" stroke="#8797d2" stroke-width="0.6"/><rect x="0.4" y="2.8" width="5.2" height="0.8" fill="#3c4c72"/><rect x="0.4" y="1.6" width="5.2" height="0.6" fill="#c8d2f0"/></svg>
<svg style="position:absolute;left:160.90px;top:277.35px" width="7" height="6.2" viewBox="0 0 7 6.2"><path d="M3.5 0 L7 6.2 L0 6.2Z" fill="#d9661e"/><rect x="3.1" y="1.9" width="0.8" height="2.3" fill="#fff"/><rect x="3.1" y="4.7" width="0.8" height="0.8" fill="#fff"/></svg>
<svg style="position:absolute;left:252.40px;top:278.15px" width="6.6" height="5.9" viewBox="0 0 6.6 5.9"><rect x="0" y="1.0" width="3.1" height="4.9" fill="#a3a9c9"/><rect x="3.3" y="0" width="3.2" height="5.9" fill="#8a92ba"/><rect x="4.3" y="1" width="0.5" height="4" fill="#b4b9d6"/></svg>
<svg style="position:absolute;left:973.30px;top:276.05px" width="7.2" height="7.2" viewBox="0 0 7.2 7.2"><circle cx="3.6" cy="3.6" r="3.5" fill="#1f7f1f"/></svg>
<div style="position:absolute;left:995.00px;top:277.75px;width:5.00px;height:5.00px;background:#e8e8e8;border:0.7px solid #c8c8c8;box-sizing:border-box;border-radius:1px"></div>
<div style="position:absolute;left:105.80px;top:288.00px;width:906.20px;height:15.50px;background:#f9f9f9"></div>
<div style="position:absolute;left:105.80px;top:303.00px;width:906.20px;height:1.00px;background:#e9e9e9"></div>
<svg style="position:absolute;left:109.10px;top:292.85px" width="6" height="5.6" viewBox="0 0 6 5.6"><rect x="0" y="1.1" width="6" height="4.5" rx="0.5" fill="#8797d2"/><rect x="2" y="0.2" width="2" height="1.2" fill="none" stroke="#8797d2" stroke-width="0.6"/><rect x="0.4" y="2.8" width="5.2" height="0.8" fill="#3c4c72"/><rect x="0.4" y="1.6" width="5.2" height="0.6" fill="#c8d2f0"/></svg>
<svg style="position:absolute;left:160.90px;top:292.75px" width="7" height="6.2" viewBox="0 0 7 6.2"><path d="M3.5 0 L7 6.2 L0 6.2Z" fill="#d9661e"/><rect x="3.1" y="1.9" width="0.8" height="2.3" fill="#fff"/><rect x="3.1" y="4.7" width="0.8" height="0.8" fill="#fff"/></svg>
<svg style="position:absolute;left:252.40px;top:293.55px" width="6.6" height="5.9" viewBox="0 0 6.6 5.9"><rect x="0" y="1.0" width="3.1" height="4.9" fill="#a3a9c9"/><rect x="3.3" y="0" width="3.2" height="5.9" fill="#8a92ba"/><rect x="4.3" y="1" width="0.5" height="4" fill="#b4b9d6"/></svg>
<svg style="position:absolute;left:973.30px;top:291.45px" width="7.2" height="7.2" viewBox="0 0 7.2 7.2"><circle cx="3.6" cy="3.6" r="3.5" fill="#1f7f1f"/></svg>
<div style="position:absolute;left:995.00px;top:293.15px;width:5.00px;height:5.00px;background:#e8e8e8;border:0.7px solid #c8c8c8;box-sizing:border-box;border-radius:1px"></div>
<div style="position:absolute;left:105.80px;top:303.50px;width:906.20px;height:15.60px;background:#fff"></div>
<div style="position:absolute;left:105.80px;top:318.60px;width:906.20px;height:1.00px;background:#e9e9e9"></div>
<svg style="position:absolute;left:109.10px;top:308.40px" width="6" height="5.6" viewBox="0 0 6 5.6"><rect x="0" y="1.1" width="6" height="4.5" rx="0.5" fill="#8797d2"/><rect x="2" y="0.2" width="2" height="1.2" fill="none" stroke="#8797d2" stroke-width="0.6"/><rect x="0.4" y="2.8" width="5.2" height="0.8" fill="#3c4c72"/><rect x="0.4" y="1.6" width="5.2" height="0.6" fill="#c8d2f0"/></svg>
<svg style="position:absolute;left:252.40px;top:309.10px" width="6.6" height="5.9" viewBox="0 0 6.6 5.9"><rect x="0" y="1.0" width="3.1" height="4.9" fill="#a3a9c9"/><rect x="3.3" y="0" width="3.2" height="5.9" fill="#8a92ba"/><rect x="4.3" y="1" width="0.5" height="4" fill="#b4b9d6"/></svg>
<svg style="position:absolute;left:973.30px;top:307.00px" width="7.2" height="7.2" viewBox="0 0 7.2 7.2"><circle cx="3.6" cy="3.6" r="3.5" fill="#1f7f1f"/></svg>
<div style="position:absolute;left:995.00px;top:308.70px;width:5.00px;height:5.00px;background:#e8e8e8;border:0.7px solid #c8c8c8;box-sizing:border-box;border-radius:1px"></div>
<div style="position:absolute;left:105.80px;top:319.10px;width:906.20px;height:15.80px;background:#f9f9f9"></div>
<div style="position:absolute;left:105.80px;top:334.40px;width:906.20px;height:1.00px;background:#e9e9e9"></div>
<svg style="position:absolute;left:109.10px;top:324.10px" width="6" height="5.6" viewBox="0 0 6 5.6"><rect x="0" y="1.1" width="6" height="4.5" rx="0.5" fill="#8797d2"/><rect x="2" y="0.2" width="2" height="1.2" fill="none" stroke="#8797d2" stroke-width="0.6"/><rect x="0.4" y="2.8" width="5.2" height="0.8" fill="#3c4c72"/><rect x="0.4" y="1.6" width="5.2" height="0.6" fill="#c8d2f0"/></svg>
<svg style="position:absolute;left:160.90px;top:324.00px" width="7" height="6.2" viewBox="0 0 7 6.2"><path d="M3.5 0 L7 6.2 L0 6.2Z" fill="#d9661e"/><rect x="3.1" y="1.9" width="0.8" height="2.3" fill="#fff"/><rect x="3.1" y="4.7" width="0.8" height="0.8" fill="#fff"/></svg>
<svg style="position:absolute;left:252.40px;top:324.80px" width="6.6" height="5.9" viewBox="0 0 6.6 5.9"><rect x="0" y="1.0" width="3.1" height="4.9" fill="#a3a9c9"/><rect x="3.3" y="0" width="3.2" height="5.9" fill="#8a92ba"/><rect x="4.3" y="1" width="0.5" height="4" fill="#b4b9d6"/></svg>
<svg style="position:absolute;left:973.30px;top:322.70px" width="7.2" height="7.2" viewBox="0 0 7.2 7.2"><circle cx="3.6" cy="3.6" r="3.5" fill="#1f7f1f"/></svg>
<div style="position:absolute;left:995.00px;top:324.40px;width:5.00px;height:5.00px;background:#e8e8e8;border:0.7px solid #c8c8c8;box-sizing:border-box;border-radius:1px"></div>
<div style="position:absolute;left:105.80px;top:334.90px;width:906.20px;height:15.30px;background:#fff"></div>
<div style="position:absolute;left:105.80px;top:349.70px;width:906.20px;height:1.00px;background:#e9e9e9"></div>
<svg style="position:absolute;left:109.10px;top:339.65px" width="6" height="5.6" viewBox="0 0 6 5.6"><rect x="0" y="1.1" width="6" height="4.5" rx="0.5" fill="#8797d2"/><rect x="2" y="0.2" width="2" height="1.2" fill="none" stroke="#8797d2" stroke-width="0.6"/><rect x="0.4" y="2.8" width="5.2" height="0.8" fill="#3c4c72"/><rect x="0.4" y="1.6" width="5.2" height="0.6" fill="#c8d2f0"/></svg>
<svg style="position:absolute;left:160.90px;top:339.55px" width="7" height="6.2" viewBox="0 0 7 6.2"><path d="M3.5 0 L7 6.2 L0 6.2Z" fill="#d9661e"/><rect x="3.1" y="1.9" width="0.8" height="2.3" fill="#fff"/><rect x="3.1" y="4.7" width="0.8" height="0.8" fill="#fff"/></svg>
<svg style="position:absolute;left:252.40px;top:340.35px" width="6.6" height="5.9" viewBox="0 0 6.6 5.9"><rect x="0" y="1.0" width="3.1" height="4.9" fill="#a3a9c9"/><rect x="3.3" y="0" width="3.2" height="5.9" fill="#8a92ba"/><rect x="4.3" y="1" width="0.5" height="4" fill="#b4b9d6"/></svg>
<svg style="position:absolute;left:973.30px;top:338.25px" width="7.2" height="7.2" viewBox="0 0 7.2 7.2"><circle cx="3.6" cy="3.6" r="3.5" fill="#1f7f1f"/></svg>
<div style="position:absolute;left:995.00px;top:339.95px;width:5.00px;height:5.00px;background:#e8e8e8;border:0.7px solid #c8c8c8;box-sizing:border-box;border-radius:1px"></div>
<div style="position:absolute;left:105.80px;top:350.20px;width:906.20px;height:16.00px;background:#f9f9f9"></div>
<div style="position:absolute;left:105.80px;top:365.70px;width:906.20px;height:1.00px;background:#e9e9e9"></div>
<svg style="position:absolute;left:109.10px;top:355.30px" width="6" height="5.6" viewBox="0 0 6 5.6"><rect x="0" y="1.1" width="6" height="4.5" rx="0.5" fill="#8797d2"/><rect x="2" y="0.2" width="2" height="1.2" fill="none" stroke="#8797d2" stroke-width="0.6"/><rect x="0.4" y="2.8" width="5.2" height="0.8" fill="#3c4c72"/><rect x="0.4" y="1.6" width="5.2" height="0.6" fill="#c8d2f0"/></svg>
<svg style="position:absolute;left:160.90px;top:355.20px" width="7" height="6.2" viewBox="0 0 7 6.2"><path d="M3.5 0 L7 6.2 L0 6.2Z" fill="#d9661e"/><rect x="3.1" y="1.9" width="0.8" height="2.3" fill="#fff"/><rect x="3.1" y="4.7" width="0.8" height="0.8" fill="#fff"/></svg>
<svg style="position:absolute;left:252.40px;top:356.00px" width="6.6" height="5.9" viewBox="0 0 6.6 5.9"><rect x="0" y="1.0" width="3.1" height="4.9" fill="#a3a9c9"/><rect x="3.3" y="0" width="3.2" height="5.9" fill="#8a92ba"/><rect x="4.3" y="1" width="0.5" height="4" fill="#b4b9d6"/></svg>
<svg style="position:absolute;left:973.30px;top:353.90px" width="7.2" height="7.2" viewBox="0 0 7.2 7.2"><circle cx="3.6" cy="3.6" r="3.5" fill="#1f7f1f"/></svg>
<div style="position:absolute;left:995.00px;top:355.60px;width:5.00px;height:5.00px;background:#e8e8e8;border:0.7px solid #c8c8c8;box-sizing:border-box;border-radius:1px"></div>
<div style="position:absolute;left:105.80px;top:366.20px;width:906.20px;height:25.10px;background:#fff"></div>
<div style="position:absolute;left:105.80px;top:390.80px;width:906.20px;height:1.00px;background:#e9e9e9"></div>
<svg style="position:absolute;left:109.10px;top:375.75px" width="6" height="5.6" viewBox="0 0 6 5.6"><rect x="0" y="1.1" width="6" height="4.5" rx="0.5" fill="#8797d2"/><rect x="2" y="0.2" width="2" height="1.2" fill="none" stroke="#8797d2" stroke-width="0.6"/><rect x="0.4" y="2.8" width="5.2" height="0.8" fill="#3c4c72"/><rect x="0.4" y="1.6" width="5.2" height="0.6" fill="#c8d2f0"/></svg>
<svg style="position:absolute;left:252.40px;top:376.45px" width="6.6" height="5.9" viewBox="0 0 6.6 5.9"><rect x="0" y="1.0" width="3.1" height="4.9" fill="#a3a9c9"/><rect x="3.3" y="0" width="3.2" height="5.9" fill="#8a92ba"/><rect x="4.3" y="1" width="0.5" height="4" fill="#b4b9d6"/></svg>
<svg style="position:absolute;left:973.30px;top:374.35px" width="7.2" height="7.2" viewBox="0 0 7.2 7.2"><circle cx="3.6" cy="3.6" r="3.5" fill="#1f7f1f"/></svg>
<div style="position:absolute;left:995.00px;top:376.05px;width:5.00px;height:5.00px;background:#e8e8e8;border:0.7px solid #c8c8c8;box-sizing:border-box;border-radius:1px"></div>
<div style="position:absolute;left:932.70px;top:390.60px;width:50.60px;height:1.40px;background:#fff"></div>
<div style="position:absolute;left:105.80px;top:103.40px;width:66.50px;height:1.20px;background:#dcdcdf"></div>
<div style="position:absolute;left:984.20px;top:103.40px;width:27.80px;height:1.20px;background:#dcdcdf"></div>
<svg style="position:absolute;left:0;top:0" width="1024" height="418" font-family="'Liberation Sans', sans-serif">
<text transform="translate(11.90 15.80) scale(1 1.12)" y="1.767" font-size="5.1" fill="#ffffff" text-anchor="middle" stroke="#ffffff" stroke-width="0.05">Accueil</text>
<text transform="translate(36.25 15.80) scale(1 1.12)" y="1.767" font-size="5.1" fill="#ffffff" text-anchor="middle" stroke="#ffffff" stroke-width="0.05">Tiers</text>
<text transform="translate(60.00 15.80) scale(1 1.12)" y="1.767" font-size="5.1" fill="#ffffff" text-anchor="middle" stroke="#ffffff" stroke-width="0.05">Produ<tspan letter-spacing="0.6">...</tspan></text>
<text transform="translate(85.00 15.80) scale(1 1.12)" y="1.767" font-size="5.1" fill="#ffffff" text-anchor="middle" stroke="#ffffff" stroke-width="0.05">Oppor<tspan letter-spacing="0.6">...</tspan></text>
<text transform="translate(108.00 15.80) scale(1 1.12)" y="1.767" font-size="5.1" fill="#ffffff" text-anchor="middle" stroke="#ffffff" stroke-width="0.05">Com<tspan letter-spacing="0.6">...</tspan></text>
<text transform="translate(132.50 15.80) scale(1 1.12)" y="1.767" font-size="5.1" fill="#ffffff" text-anchor="middle" stroke="#ffffff" stroke-width="0.05">Factu<tspan letter-spacing="0.6">...</tspan></text>
<text transform="translate(156.75 15.80) scale(1 1.12)" y="1.767" font-size="5.1" fill="#ffffff" text-anchor="middle" stroke="#ffffff" stroke-width="0.05">Banq<tspan letter-spacing="0.6">...</tspan></text>
<text transform="translate(181.50 15.80) scale(1 1.12)" y="1.767" font-size="5.1" fill="#ffffff" text-anchor="middle" stroke="#ffffff" stroke-width="0.05">Outils</text>
<text transform="translate(205.50 15.80) scale(1 1.12)" y="1.767" font-size="5.1" fill="#ffffff" text-anchor="middle" stroke="#ffffff" stroke-width="0.05">Réser<tspan letter-spacing="0.6">...</tspan></text>
<text transform="translate(229.00 15.80) scale(1 1.12)" y="1.767" font-size="5.1" fill="#ffffff" text-anchor="middle" stroke="#ffffff" stroke-width="0.05">Gesti<tspan letter-spacing="0.6">...</tspan></text>
<text transform="translate(253.00 15.80) scale(1 1.12)" y="1.767" font-size="5.1" fill="#ffffff" text-anchor="middle" stroke="#ffffff" stroke-width="0.05">Team<tspan letter-spacing="0.6">...</tspan></text>
<text transform="translate(278.50 15.80) scale(1 1.12)" y="1.767" font-size="5.1" fill="#ffffff" text-anchor="middle" stroke="#ffffff" stroke-width="0.05">To-Do<tspan letter-spacing="0.6">...</tspan></text>
<text transform="translate(302.00 15.80) scale(1 1.12)" y="1.767" font-size="5.1" fill="#ffffff" text-anchor="middle" stroke="#ffffff" stroke-width="0.05">GMBC</text>
<text transform="translate(326.00 15.80) scale(1 1.12)" y="1.767" font-size="5.1" fill="#ffffff" text-anchor="middle" stroke="#ffffff" stroke-width="0.05">Suivi <tspan letter-spacing="0.6">...</tspan></text>
<text transform="translate(350.60 15.80) scale(1 1.12)" y="1.767" font-size="5.1" fill="#ffffff" text-anchor="middle" stroke="#ffffff" stroke-width="0.05">E-CV</text>
<text transform="translate(374.75 15.80) scale(1 1.12)" y="1.767" font-size="5.1" fill="#ffffff" text-anchor="middle" stroke="#ffffff" stroke-width="0.05">Recru<tspan letter-spacing="0.6">...</tspan></text>
<text transform="translate(399.00 15.80) scale(1 1.12)" y="1.767" font-size="5.1" fill="#ffffff" text-anchor="middle" stroke="#ffffff" stroke-width="0.05">Maint<tspan letter-spacing="0.6">...</tspan></text>
<text transform="translate(422.75 15.80) scale(1 1.12)" y="1.767" font-size="5.1" fill="#ffffff" text-anchor="middle" stroke="#ffffff" stroke-width="0.05">Parc <tspan letter-spacing="0.6">...</tspan></text>
<text transform="translate(447.00 15.80) scale(1 1.12)" y="1.767" font-size="5.1" fill="#ffffff" text-anchor="middle" stroke="#ffffff" stroke-width="0.05">Docu<tspan letter-spacing="0.6">...</tspan></text>
<text transform="translate(640.00 11.10) scale(1 1.12)" y="2.079" font-size="6.0" fill="#f4f4fa" text-anchor="start">superadmin</text>
<text transform="translate(6.00 62.40) scale(1 1.12)" y="2.079" font-size="6.0" fill="#a4a4a4" text-anchor="start">Rechercher</text>
<text transform="translate(6.00 79.00) scale(1 1.12)" y="2.114" font-size="6.1" fill="#262626" text-anchor="start" font-weight="bold">Opportunités | Projets</text>
<text transform="translate(6.00 91.90) scale(1 1.12)" y="2.114" font-size="6.1" fill="#333" text-anchor="start">Nouvelle opp. ou projet</text>
<text transform="translate(6.00 102.60) scale(1 1.12)" y="2.114" font-size="6.1" fill="#333" text-anchor="start">Liste</text>
<text transform="translate(11.00 113.90) scale(1 1.12)" y="2.114" font-size="6.1" fill="#333" text-anchor="start">Liste des opp. ouvertes</text>
<text transform="translate(11.00 124.60) scale(1 1.12)" y="2.114" font-size="6.1" fill="#333" text-anchor="start">Liste des projets ouverts</text>
<text transform="translate(6.00 135.40) scale(1 1.12)" y="2.114" font-size="6.1" fill="#333" text-anchor="start">Statistiques</text>
<text transform="translate(6.00 151.70) scale(1 1.12)" y="2.114" font-size="6.1" fill="#262626" text-anchor="start" font-weight="bold">Tâches/activités</text>
<text transform="translate(6.00 164.40) scale(1 1.12)" y="2.114" font-size="6.1" fill="#333" text-anchor="start">Nouvelle tâche</text>
<text transform="translate(6.00 175.40) scale(1 1.12)" y="2.114" font-size="6.1" fill="#333" text-anchor="start">Liste</text>
<text transform="translate(6.00 186.20) scale(1 1.12)" y="2.114" font-size="6.1" fill="#333" text-anchor="start">Statistiques</text>
<text transform="translate(6.00 203.00) scale(1 1.12)" y="2.114" font-size="6.1" fill="#262626" text-anchor="start" font-weight="bold">Temps consommés</text>
<text transform="translate(6.00 220.30) scale(1 1.12)" y="2.114" font-size="6.1" fill="#262626" text-anchor="start" font-weight="bold">Projets sur Maps</text>
<text transform="translate(124.00 39.30) scale(1 1.12)" y="2.703" font-size="7.8" fill="#7a6545" text-anchor="start">Projets</text>
<text transform="translate(159.00 39.30) scale(1 1.12)" y="2.703" font-size="7.8" fill="#7a6545" text-anchor="start">(16)</text>
<text transform="translate(887.30 39.40) scale(1 1.12)" y="2.356" font-size="6.8" fill="#333" text-anchor="start">25</text>
<text transform="translate(928.00 39.00) scale(1 1.12)" y="2.425" font-size="7.0" fill="#2a2a6e" text-anchor="start">NOUVEAU PROJET</text>
<text transform="translate(110.00 60.20) scale(1 1.12)" y="2.107" font-size="6.08" fill="#2a2a2a" text-anchor="start">Projets avec cet utilisateur comme contact</text>
<text transform="translate(282.60 60.20) scale(1 1.12)" y="2.107" font-size="6.08" fill="#2a2a2a" text-anchor="start">Tiers ayant pour commercial:</text>
<text transform="translate(109.60 92.60) scale(1 1.12)" y="2.408" font-size="6.95" fill="#40408a" text-anchor="start" text-decoration="underline">Réf.</text>
<text transform="translate(176.00 92.60) scale(1 1.12)" y="2.408" font-size="6.95" fill="#40408a" text-anchor="start">Libellé</text>
<text transform="translate(253.00 92.60) scale(1 1.12)" y="2.408" font-size="6.95" fill="#40408a" text-anchor="start">Tiers</text>
<text transform="translate(329.50 92.60) scale(1 1.12)" y="2.408" font-size="6.95" fill="#40408a" text-anchor="middle">Date début</text>
<text transform="translate(387.00 92.60) scale(1 1.12)" y="2.408" font-size="6.95" fill="#40408a" text-anchor="middle">Date fin</text>
<text transform="translate(419.50 92.60) scale(1 1.12)" y="2.408" font-size="6.95" fill="#40408a" text-anchor="start">Visibilité</text>
<text transform="translate(508.50 88.90) scale(1 1.12)" y="2.408" font-size="6.95" fill="#40408a" text-anchor="middle">Statut</text>
<text transform="translate(508.50 96.50) scale(1 1.12)" y="2.408" font-size="6.95" fill="#40408a" text-anchor="middle">opportunité</text>
<text transform="translate(573.40 88.90) scale(1 1.12)" y="2.408" font-size="6.95" fill="#40408a" text-anchor="end">Montant</text>
<text transform="translate(573.40 96.50) scale(1 1.12)" y="2.408" font-size="6.95" fill="#40408a" text-anchor="end">opportunité</text>
<text transform="translate(603.00 88.90) scale(1 1.12)" y="2.408" font-size="6.95" fill="#40408a" text-anchor="end">Prob.</text>
<text transform="translate(603.00 96.50) scale(1 1.12)" y="2.408" font-size="6.95" fill="#40408a" text-anchor="end">opp.</text>
<text transform="translate(611.00 92.60) scale(1 1.12)" y="2.408" font-size="6.95" fill="#40408a" text-anchor="start">Pays</text>
<text transform="translate(706.60 92.60) scale(1 1.12)" y="2.408" font-size="6.95" fill="#40408a" text-anchor="start">Région/Département</text>
<text transform="translate(801.70 92.60) scale(1 1.12)" y="2.408" font-size="6.95" fill="#40408a" text-anchor="start">Ville</text>
<text transform="translate(897.00 92.60) scale(1 1.12)" y="2.408" font-size="6.95" fill="#40408a" text-anchor="start">Adresse</text>
<text transform="translate(980.00 92.60) scale(1 1.12)" y="2.408" font-size="6.95" fill="#40408a" text-anchor="end">État</text>
<text transform="translate(117.90 115.67) scale(1 1.12)" y="2.391" font-size="6.9" fill="#2e3d72" text-anchor="start">PJ1902-0001</text>
<text transform="translate(176.00 115.67) scale(1 1.12)" y="2.432" font-size="7.02" fill="#3c3c3c" text-anchor="start">Projet CHART Module</text>
<text transform="translate(260.60 115.67) scale(1 1.12)" y="2.432" font-size="7.02" fill="#2e3d72" text-anchor="start">Ahmed K...</text>
<text transform="translate(329.50 115.67) scale(1 1.12)" y="2.432" font-size="7.02" fill="#3c3c3c" text-anchor="middle">18/02/2019</text>
<text transform="translate(419.70 115.67) scale(1 1.12)" y="2.432" font-size="7.02" fill="#3c3c3c" text-anchor="start">Contacts projet</text>
<text transform="translate(508.50 115.67) scale(1 1.12)" y="2.432" font-size="7.02" fill="#3c3c3c" text-anchor="middle">Qualification</text>
<text transform="translate(573.30 115.67) scale(1 1.12)" y="2.432" font-size="7.02" fill="#3c3c3c" text-anchor="end">4 500,00</text>
<text transform="translate(602.90 115.67) scale(1 1.12)" y="2.432" font-size="7.02" fill="#3c3c3c" text-anchor="end">0%</text>
<text transform="translate(610.80 115.67) scale(1 1.12)" y="2.432" font-size="7.02" fill="#3c3c3c" text-anchor="start">Maroc</text>
<text transform="translate(706.60 111.32) scale(1 1.12)" y="2.432" font-size="7.02" fill="#3c3c3c" text-anchor="start">Laâyoune-Boujdour-Sakia</text>
<text transform="translate(706.60 120.62) scale(1 1.12)" y="2.432" font-size="7.02" fill="#3c3c3c" text-anchor="start">el Hamra</text>
<text transform="translate(801.80 115.67) scale(1 1.12)" y="2.432" font-size="7.02" fill="#3c3c3c" text-anchor="start">Province de Lâayoune</text>
<text transform="translate(897.10 111.32) scale(1 1.12)" y="2.432" font-size="7.02" fill="#3c3c3c" text-anchor="start">Boulevard</text>
<text transform="translate(897.10 120.62) scale(1 1.12)" y="2.432" font-size="7.02" fill="#3c3c3c" text-anchor="start">Mecque</text>
<text transform="translate(971.00 115.67) scale(1 1.12)" y="2.432" font-size="7.02" fill="#3c3c3c" text-anchor="end">Ouvert</text>
<text transform="translate(117.90 136.15) scale(1 1.12)" y="2.391" font-size="6.9" fill="#2e3d72" text-anchor="start">PJ1903-0002</text>
<text transform="translate(176.00 136.15) scale(1 1.12)" y="2.432" font-size="7.02" fill="#3c3c3c" text-anchor="start">PJ1903-0002</text>
<text transform="translate(260.60 136.15) scale(1 1.12)" y="2.432" font-size="7.02" fill="#2e3d72" text-anchor="start">AXA Ass...</text>
<text transform="translate(329.50 136.15) scale(1 1.12)" y="2.432" font-size="7.02" fill="#3c3c3c" text-anchor="middle">01/03/2019</text>
<text transform="translate(387.00 136.15) scale(1 1.12)" y="2.432" font-size="7.02" fill="#3c3c3c" text-anchor="middle">27/07/2019</text>
<text transform="translate(419.70 136.15) scale(1 1.12)" y="2.432" font-size="7.02" fill="#3c3c3c" text-anchor="start">Contacts projet</text>
<text transform="translate(508.50 136.15) scale(1 1.12)" y="2.432" font-size="7.02" fill="#3c3c3c" text-anchor="middle">Gagné</text>
<text transform="translate(573.30 136.15) scale(1 1.12)" y="2.432" font-size="7.02" fill="#3c3c3c" text-anchor="end">6 000,00</text>
<text transform="translate(602.90 136.15) scale(1 1.12)" y="2.432" font-size="7.02" fill="#3c3c3c" text-anchor="end">60%</text>
<text transform="translate(610.80 136.15) scale(1 1.12)" y="2.432" font-size="7.02" fill="#3c3c3c" text-anchor="start">Maroc</text>
<text transform="translate(706.60 136.15) scale(1 1.12)" y="2.432" font-size="7.02" fill="#3c3c3c" text-anchor="start">Grand Cassablanca</text>
<text transform="translate(801.80 136.15) scale(1 1.12)" y="2.432" font-size="7.02" fill="#3c3c3c" text-anchor="start">Préfecture de Casablanca</text>
<text transform="translate(897.10 136.15) scale(1 1.12)" y="2.432" font-size="7.02" fill="#3c3c3c" text-anchor="start">EL Maarif</text>
<text transform="translate(971.00 136.15) scale(1 1.12)" y="2.432" font-size="7.02" fill="#3c3c3c" text-anchor="end">Ouvert</text>
<text transform="translate(117.90 161.30) scale(1 1.12)" y="2.391" font-size="6.9" fill="#2e3d72" text-anchor="start">PJ1903-0003</text>
<text transform="translate(176.00 161.30) scale(1 1.12)" y="2.432" font-size="7.02" fill="#3c3c3c" text-anchor="start">PJ1903-0003</text>
<text transform="translate(260.60 161.30) scale(1 1.12)" y="2.432" font-size="7.02" fill="#2e3d72" text-anchor="start">SARL GTH</text>
<text transform="translate(329.50 161.30) scale(1 1.12)" y="2.432" font-size="7.02" fill="#3c3c3c" text-anchor="middle">01/03/2019</text>
<text transform="translate(387.00 161.30) scale(1 1.12)" y="2.432" font-size="7.02" fill="#3c3c3c" text-anchor="middle">16/08/2019</text>
<text transform="translate(419.70 161.30) scale(1 1.12)" y="2.432" font-size="7.02" fill="#3c3c3c" text-anchor="start">Contacts projet</text>
<text transform="translate(508.50 161.30) scale(1 1.12)" y="2.432" font-size="7.02" fill="#3c3c3c" text-anchor="middle">Prospection</text>
<text transform="translate(573.30 161.30) scale(1 1.12)" y="2.432" font-size="7.02" fill="#3c3c3c" text-anchor="end">7 400,00</text>
<text transform="translate(602.90 161.30) scale(1 1.12)" y="2.432" font-size="7.02" fill="#3c3c3c" text-anchor="end">0%</text>
<text transform="translate(610.80 161.30) scale(1 1.12)" y="2.432" font-size="7.02" fill="#3c3c3c" text-anchor="start">Maroc</text>
<text transform="translate(706.60 156.45) scale(1 1.12)" y="2.432" font-size="7.02" fill="#3c3c3c" text-anchor="start">Laâyoune-Boujdour-Sakia</text>
<text transform="translate(706.60 165.75) scale(1 1.12)" y="2.432" font-size="7.02" fill="#3c3c3c" text-anchor="start">el Hamra</text>
<text transform="translate(801.80 161.30) scale(1 1.12)" y="2.432" font-size="7.02" fill="#3c3c3c" text-anchor="start">Province de Lâayoune</text>
<text transform="translate(897.10 151.80) scale(1 1.12)" y="2.432" font-size="7.02" fill="#3c3c3c" text-anchor="start">Rue</text>
<text transform="translate(897.10 161.10) scale(1 1.12)" y="2.432" font-size="7.02" fill="#3c3c3c" text-anchor="start">Zaouiat</text>
<text transform="translate(897.10 170.40) scale(1 1.12)" y="2.432" font-size="7.02" fill="#3c3c3c" text-anchor="start">Cheikh</text>
<text transform="translate(971.00 161.30) scale(1 1.12)" y="2.432" font-size="7.02" fill="#3c3c3c" text-anchor="end">Ouvert</text>
<text transform="translate(117.90 186.35) scale(1 1.12)" y="2.391" font-size="6.9" fill="#2e3d72" text-anchor="start">PJ1903-0004</text>
<text transform="translate(176.00 186.35) scale(1 1.12)" y="2.432" font-size="7.02" fill="#3c3c3c" text-anchor="start">PJ1903-0004</text>
<text transform="translate(260.60 186.35) scale(1 1.12)" y="2.432" font-size="7.02" fill="#2e3d72" text-anchor="start">AXA Ass...</text>
<text transform="translate(329.50 186.35) scale(1 1.12)" y="2.432" font-size="7.02" fill="#3c3c3c" text-anchor="middle">01/03/2019</text>
<text transform="translate(387.00 186.35) scale(1 1.12)" y="2.432" font-size="7.02" fill="#3c3c3c" text-anchor="middle">21/06/2019</text>
<text transform="translate(419.70 186.35) scale(1 1.12)" y="2.432" font-size="7.02" fill="#3c3c3c" text-anchor="start">Contacts projet</text>
<text transform="translate(508.50 186.35) scale(1 1.12)" y="2.432" font-size="7.02" fill="#3c3c3c" text-anchor="middle">Proposition</text>
<text transform="translate(573.30 186.35) scale(1 1.12)" y="2.432" font-size="7.02" fill="#3c3c3c" text-anchor="end">6 000,00</text>
<text transform="translate(602.90 186.35) scale(1 1.12)" y="2.432" font-size="7.02" fill="#3c3c3c" text-anchor="end">40%</text>
<text transform="translate(610.80 186.35) scale(1 1.12)" y="2.432" font-size="7.02" fill="#3c3c3c" text-anchor="start">Maroc</text>
<text transform="translate(706.60 186.35) scale(1 1.12)" y="2.432" font-size="7.02" fill="#3c3c3c" text-anchor="start">Oued Ed-Dahab Lagouira</text>
<text transform="translate(801.80 186.35) scale(1 1.12)" y="2.432" font-size="7.02" fill="#3c3c3c" text-anchor="start">Province d'Aousserd</text>
<text transform="translate(971.00 186.35) scale(1 1.12)" y="2.432" font-size="7.02" fill="#3c3c3c" text-anchor="end">Ouvert</text>
<text transform="translate(117.90 202.20) scale(1 1.12)" y="2.391" font-size="6.9" fill="#2e3d72" text-anchor="start">PJ1903-0005</text>
<text transform="translate(176.00 202.20) scale(1 1.12)" y="2.432" font-size="7.02" fill="#3c3c3c" text-anchor="start">PJ1903-0005</text>
<text transform="translate(260.60 202.20) scale(1 1.12)" y="2.432" font-size="7.02" fill="#2e3d72" text-anchor="start">SARL GTH</text>
<text transform="translate(329.50 202.20) scale(1 1.12)" y="2.432" font-size="7.02" fill="#3c3c3c" text-anchor="middle">01/03/2019</text>
<text transform="translate(387.00 202.20) scale(1 1.12)" y="2.432" font-size="7.02" fill="#3c3c3c" text-anchor="middle">24/01/2020</text>
<text transform="translate(419.70 202.20) scale(1 1.12)" y="2.432" font-size="7.02" fill="#3c3c3c" text-anchor="start">Contacts projet</text>
<text transform="translate(508.50 202.20) scale(1 1.12)" y="2.432" font-size="7.02" fill="#3c3c3c" text-anchor="middle">Gagné</text>
<text transform="translate(573.30 202.20) scale(1 1.12)" y="2.432" font-size="7.02" fill="#3c3c3c" text-anchor="end">6 000,00</text>
<text transform="translate(602.90 202.20) scale(1 1.12)" y="2.432" font-size="7.02" fill="#3c3c3c" text-anchor="end">100%</text>
<text transform="translate(610.80 202.20) scale(1 1.12)" y="2.432" font-size="7.02" fill="#3c3c3c" text-anchor="start">Maroc</text>
<text transform="translate(706.60 202.20) scale(1 1.12)" y="2.432" font-size="7.02" fill="#3c3c3c" text-anchor="start">Guelmim-Es Smara</text>
<text transform="translate(801.80 202.20) scale(1 1.12)" y="2.432" font-size="7.02" fill="#3c3c3c" text-anchor="start">Province de Tan-Tan</text>
<text transform="translate(971.00 202.20) scale(1 1.12)" y="2.432" font-size="7.02" fill="#3c3c3c" text-anchor="end">Ouvert</text>
<text transform="translate(117.90 217.65) scale(1 1.12)" y="2.391" font-size="6.9" fill="#2e3d72" text-anchor="start">PJ1903-0006</text>
<text transform="translate(176.00 217.65) scale(1 1.12)" y="2.432" font-size="7.02" fill="#3c3c3c" text-anchor="start">PJ1903-0006</text>
<text transform="translate(260.60 217.65) scale(1 1.12)" y="2.432" font-size="7.02" fill="#2e3d72" text-anchor="start">AXA Ass...</text>
<text transform="translate(329.50 217.65) scale(1 1.12)" y="2.432" font-size="7.02" fill="#3c3c3c" text-anchor="middle">01/03/2019</text>
<text transform="translate(387.00 217.65) scale(1 1.12)" y="2.432" font-size="7.02" fill="#3c3c3c" text-anchor="middle">25/01/2020</text>
<text transform="translate(419.70 217.65) scale(1 1.12)" y="2.432" font-size="7.02" fill="#3c3c3c" text-anchor="start">Contacts projet</text>
<text transform="translate(508.50 217.65) scale(1 1.12)" y="2.432" font-size="7.02" fill="#3c3c3c" text-anchor="middle">Gagné</text>
<text transform="translate(573.30 217.65) scale(1 1.12)" y="2.432" font-size="7.02" fill="#3c3c3c" text-anchor="end">620,00</text>
<text transform="translate(602.90 217.65) scale(1 1.12)" y="2.432" font-size="7.02" fill="#3c3c3c" text-anchor="end">0%</text>
<text transform="translate(610.80 217.65) scale(1 1.12)" y="2.432" font-size="7.02" fill="#3c3c3c" text-anchor="start">Maroc</text>
<text transform="translate(706.60 217.65) scale(1 1.12)" y="2.432" font-size="7.02" fill="#3c3c3c" text-anchor="start">Rabat-Salé-Zemour-Zaër</text>
<text transform="translate(801.80 217.65) scale(1 1.12)" y="2.432" font-size="7.02" fill="#3c3c3c" text-anchor="start">Préfecture de Rabat</text>
<text transform="translate(971.00 217.65) scale(1 1.12)" y="2.432" font-size="7.02" fill="#3c3c3c" text-anchor="end">Ouvert</text>
<text transform="translate(117.90 233.05) scale(1 1.12)" y="2.391" font-size="6.9" fill="#2e3d72" text-anchor="start">PJ1903-0007</text>
<text transform="translate(176.00 233.05) scale(1 1.12)" y="2.432" font-size="7.02" fill="#3c3c3c" text-anchor="start">PJ1903-0007</text>
<text transform="translate(260.60 233.05) scale(1 1.12)" y="2.432" font-size="7.02" fill="#2e3d72" text-anchor="start">AXA Ass...</text>
<text transform="translate(329.50 233.05) scale(1 1.12)" y="2.432" font-size="7.02" fill="#3c3c3c" text-anchor="middle">01/03/2019</text>
<text transform="translate(387.00 233.05) scale(1 1.12)" y="2.432" font-size="7.02" fill="#3c3c3c" text-anchor="middle">25/01/2020</text>
<text transform="translate(419.70 233.05) scale(1 1.12)" y="2.432" font-size="7.02" fill="#3c3c3c" text-anchor="start">Contacts projet</text>
<text transform="translate(508.50 233.05) scale(1 1.12)" y="2.432" font-size="7.02" fill="#3c3c3c" text-anchor="middle">Perdu</text>
<text transform="translate(573.30 233.05) scale(1 1.12)" y="2.432" font-size="7.02" fill="#3c3c3c" text-anchor="end">620,00</text>
<text transform="translate(602.90 233.05) scale(1 1.12)" y="2.432" font-size="7.02" fill="#3c3c3c" text-anchor="end">0%</text>
<text transform="translate(610.80 233.05) scale(1 1.12)" y="2.432" font-size="7.02" fill="#3c3c3c" text-anchor="start">Maroc</text>
<text transform="translate(706.60 233.05) scale(1 1.12)" y="2.432" font-size="7.02" fill="#3c3c3c" text-anchor="start">Doukahla-Adba</text>
<text transform="translate(801.80 233.05) scale(1 1.12)" y="2.432" font-size="7.02" fill="#3c3c3c" text-anchor="start">Province de Safi</text>
<text transform="translate(971.00 233.05) scale(1 1.12)" y="2.432" font-size="7.02" fill="#3c3c3c" text-anchor="end">Ouvert</text>
<text transform="translate(117.90 248.70) scale(1 1.12)" y="2.391" font-size="6.9" fill="#2e3d72" text-anchor="start">PJ1903-0008</text>
<text transform="translate(176.00 248.70) scale(1 1.12)" y="2.432" font-size="7.02" fill="#3c3c3c" text-anchor="start">PJ1903-0008\r\n</text>
<text transform="translate(260.60 248.70) scale(1 1.12)" y="2.432" font-size="7.02" fill="#2e3d72" text-anchor="start">AXA Ass...</text>
<text transform="translate(329.50 248.70) scale(1 1.12)" y="2.432" font-size="7.02" fill="#3c3c3c" text-anchor="middle">01/03/2019</text>
<text transform="translate(387.00 248.70) scale(1 1.12)" y="2.432" font-size="7.02" fill="#3c3c3c" text-anchor="middle">31/07/2020</text>
<text transform="translate(419.70 248.70) scale(1 1.12)" y="2.432" font-size="7.02" fill="#3c3c3c" text-anchor="start">Contacts projet</text>
<text transform="translate(508.50 248.70) scale(1 1.12)" y="2.432" font-size="7.02" fill="#3c3c3c" text-anchor="middle">Qualification</text>
<text transform="translate(573.30 248.70) scale(1 1.12)" y="2.432" font-size="7.02" fill="#3c3c3c" text-anchor="end">6 000,00</text>
<text transform="translate(602.90 248.70) scale(1 1.12)" y="2.432" font-size="7.02" fill="#3c3c3c" text-anchor="end">60%</text>
<text transform="translate(610.80 248.70) scale(1 1.12)" y="2.432" font-size="7.02" fill="#3c3c3c" text-anchor="start">Maroc</text>
<text transform="translate(706.60 248.70) scale(1 1.12)" y="2.432" font-size="7.02" fill="#3c3c3c" text-anchor="start">Taza-Al Hoceima-Taounate</text>
<text transform="translate(801.80 248.70) scale(1 1.12)" y="2.432" font-size="7.02" fill="#3c3c3c" text-anchor="start">Province d'Al Hoceïma</text>
<text transform="translate(971.00 248.70) scale(1 1.12)" y="2.432" font-size="7.02" fill="#3c3c3c" text-anchor="end">Ouvert</text>
<text transform="translate(117.90 264.60) scale(1 1.12)" y="2.391" font-size="6.9" fill="#2e3d72" text-anchor="start">PJ1903-0009</text>
<text transform="translate(176.00 264.60) scale(1 1.12)" y="2.432" font-size="7.02" fill="#3c3c3c" text-anchor="start">PJ1903-0009</text>
<text transform="translate(260.60 264.60) scale(1 1.12)" y="2.432" font-size="7.02" fill="#2e3d72" text-anchor="start">AXA Ass...</text>
<text transform="translate(329.50 264.60) scale(1 1.12)" y="2.432" font-size="7.02" fill="#3c3c3c" text-anchor="middle">01/03/2019</text>
<text transform="translate(387.00 264.60) scale(1 1.12)" y="2.432" font-size="7.02" fill="#3c3c3c" text-anchor="middle">27/07/2019</text>
<text transform="translate(419.70 264.60) scale(1 1.12)" y="2.432" font-size="7.02" fill="#3c3c3c" text-anchor="start">Contacts projet</text>
<text transform="translate(508.50 264.60) scale(1 1.12)" y="2.432" font-size="7.02" fill="#3c3c3c" text-anchor="middle">Négociation</text>
<text transform="translate(573.30 264.60) scale(1 1.12)" y="2.432" font-size="7.02" fill="#3c3c3c" text-anchor="end">6 000,00</text>
<text transform="translate(602.90 264.60) scale(1 1.12)" y="2.432" font-size="7.02" fill="#3c3c3c" text-anchor="end">60%</text>
<text transform="translate(610.80 264.60) scale(1 1.12)" y="2.432" font-size="7.02" fill="#3c3c3c" text-anchor="start">Maroc</text>
<text transform="translate(706.60 264.60) scale(1 1.12)" y="2.432" font-size="7.02" fill="#3c3c3c" text-anchor="start">Meknès-Tafialet</text>
<text transform="translate(801.80 264.60) scale(1 1.12)" y="2.432" font-size="7.02" fill="#3c3c3c" text-anchor="start">Préfecture de Meknès</text>
<text transform="translate(971.00 264.60) scale(1 1.12)" y="2.432" font-size="7.02" fill="#3c3c3c" text-anchor="end">Ouvert</text>
<text transform="translate(117.90 280.35) scale(1 1.12)" y="2.391" font-size="6.9" fill="#2e3d72" text-anchor="start">PJ1903-0010</text>
<text transform="translate(176.00 280.35) scale(1 1.12)" y="2.432" font-size="7.02" fill="#3c3c3c" text-anchor="start">Libellé du projet</text>
<text transform="translate(260.60 280.35) scale(1 1.12)" y="2.432" font-size="7.02" fill="#2e3d72" text-anchor="start">SARL GTH</text>
<text transform="translate(329.50 280.35) scale(1 1.12)" y="2.432" font-size="7.02" fill="#3c3c3c" text-anchor="middle">01/03/2019</text>
<text transform="translate(387.00 280.35) scale(1 1.12)" y="2.432" font-size="7.02" fill="#3c3c3c" text-anchor="middle">16/08/2019</text>
<text transform="translate(419.70 280.35) scale(1 1.12)" y="2.432" font-size="7.02" fill="#3c3c3c" text-anchor="start">Contacts projet</text>
<text transform="translate(508.50 280.35) scale(1 1.12)" y="2.432" font-size="7.02" fill="#3c3c3c" text-anchor="middle">Qualification</text>
<text transform="translate(573.30 280.35) scale(1 1.12)" y="2.432" font-size="7.02" fill="#3c3c3c" text-anchor="end">7 400,00</text>
<text transform="translate(602.90 280.35) scale(1 1.12)" y="2.432" font-size="7.02" fill="#3c3c3c" text-anchor="end">20%</text>
<text transform="translate(610.80 280.35) scale(1 1.12)" y="2.432" font-size="7.02" fill="#3c3c3c" text-anchor="start">Maroc</text>
<text transform="translate(706.60 280.35) scale(1 1.12)" y="2.432" font-size="7.02" fill="#3c3c3c" text-anchor="start">Grand Cassablanca</text>
<text transform="translate(801.80 280.35) scale(1 1.12)" y="2.432" font-size="7.02" fill="#3c3c3c" text-anchor="start">Province de Médiouna</text>
<text transform="translate(971.00 280.35) scale(1 1.12)" y="2.432" font-size="7.02" fill="#3c3c3c" text-anchor="end">Ouvert</text>
<text transform="translate(117.90 295.75) scale(1 1.12)" y="2.391" font-size="6.9" fill="#2e3d72" text-anchor="start">PJ1903-0011</text>
<text transform="translate(176.00 295.75) scale(1 1.12)" y="2.432" font-size="7.02" fill="#3c3c3c" text-anchor="start">PJ1903-0011\r\n</text>
<text transform="translate(260.60 295.75) scale(1 1.12)" y="2.432" font-size="7.02" fill="#2e3d72" text-anchor="start">SARL GTH</text>
<text transform="translate(329.50 295.75) scale(1 1.12)" y="2.432" font-size="7.02" fill="#3c3c3c" text-anchor="middle">01/03/2019</text>
<text transform="translate(387.00 295.75) scale(1 1.12)" y="2.432" font-size="7.02" fill="#3c3c3c" text-anchor="middle">16/08/2019</text>
<text transform="translate(419.70 295.75) scale(1 1.12)" y="2.432" font-size="7.02" fill="#3c3c3c" text-anchor="start">Contacts projet</text>
<text transform="translate(508.50 295.75) scale(1 1.12)" y="2.432" font-size="7.02" fill="#3c3c3c" text-anchor="middle">Qualification</text>
<text transform="translate(573.30 295.75) scale(1 1.12)" y="2.432" font-size="7.02" fill="#3c3c3c" text-anchor="end">7 400,00</text>
<text transform="translate(602.90 295.75) scale(1 1.12)" y="2.432" font-size="7.02" fill="#3c3c3c" text-anchor="end">20%</text>
<text transform="translate(610.80 295.75) scale(1 1.12)" y="2.432" font-size="7.02" fill="#3c3c3c" text-anchor="start">France</text>
<text transform="translate(706.60 295.75) scale(1 1.12)" y="2.432" font-size="7.02" fill="#3c3c3c" text-anchor="start">Île-de-France</text>
<text transform="translate(801.80 295.75) scale(1 1.12)" y="2.432" font-size="7.02" fill="#3c3c3c" text-anchor="start">Seine-Saint-Denis</text>
<text transform="translate(971.00 295.75) scale(1 1.12)" y="2.432" font-size="7.02" fill="#3c3c3c" text-anchor="end">Ouvert</text>
<text transform="translate(117.90 311.30) scale(1 1.12)" y="2.391" font-size="6.9" fill="#2e3d72" text-anchor="start">PJ1903-0012</text>
<text transform="translate(176.00 311.30) scale(1 1.12)" y="2.432" font-size="7.02" fill="#3c3c3c" text-anchor="start">PJ1903-0012</text>
<text transform="translate(260.60 311.30) scale(1 1.12)" y="2.432" font-size="7.02" fill="#2e3d72" text-anchor="start">AXA Ass...</text>
<text transform="translate(329.50 311.30) scale(1 1.12)" y="2.432" font-size="7.02" fill="#3c3c3c" text-anchor="middle">01/03/2019</text>
<text transform="translate(387.00 311.30) scale(1 1.12)" y="2.432" font-size="7.02" fill="#3c3c3c" text-anchor="middle">25/01/2020</text>
<text transform="translate(419.70 311.30) scale(1 1.12)" y="2.432" font-size="7.02" fill="#3c3c3c" text-anchor="start">Contacts projet</text>
<text transform="translate(508.50 311.30) scale(1 1.12)" y="2.432" font-size="7.02" fill="#3c3c3c" text-anchor="middle">Perdu</text>
<text transform="translate(573.30 311.30) scale(1 1.12)" y="2.432" font-size="7.02" fill="#3c3c3c" text-anchor="end">7 020,00</text>
<text transform="translate(602.90 311.30) scale(1 1.12)" y="2.432" font-size="7.02" fill="#3c3c3c" text-anchor="end">0%</text>
<text transform="translate(610.80 311.30) scale(1 1.12)" y="2.432" font-size="7.02" fill="#3c3c3c" text-anchor="start">France</text>
<text transform="translate(706.60 311.30) scale(1 1.12)" y="2.432" font-size="7.02" fill="#3c3c3c" text-anchor="start">Centre</text>
<text transform="translate(801.80 311.30) scale(1 1.12)" y="2.432" font-size="7.02" fill="#3c3c3c" text-anchor="start">Indre-et-Loire</text>
<text transform="translate(971.00 311.30) scale(1 1.12)" y="2.432" font-size="7.02" fill="#3c3c3c" text-anchor="end">Ouvert</text>
<text transform="translate(117.90 327.00) scale(1 1.12)" y="2.391" font-size="6.9" fill="#2e3d72" text-anchor="start">PJ1903-0013</text>
<text transform="translate(176.00 327.00) scale(1 1.12)" y="2.432" font-size="7.02" fill="#3c3c3c" text-anchor="start">PJ1903-0013</text>
<text transform="translate(260.60 327.00) scale(1 1.12)" y="2.432" font-size="7.02" fill="#2e3d72" text-anchor="start">SARL GTH</text>
<text transform="translate(329.50 327.00) scale(1 1.12)" y="2.432" font-size="7.02" fill="#3c3c3c" text-anchor="middle">01/03/2019</text>
<text transform="translate(387.00 327.00) scale(1 1.12)" y="2.432" font-size="7.02" fill="#3c3c3c" text-anchor="middle">16/08/2019</text>
<text transform="translate(419.70 327.00) scale(1 1.12)" y="2.432" font-size="7.02" fill="#3c3c3c" text-anchor="start">Contacts projet</text>
<text transform="translate(508.50 327.00) scale(1 1.12)" y="2.432" font-size="7.02" fill="#3c3c3c" text-anchor="middle">Proposition</text>
<text transform="translate(573.30 327.00) scale(1 1.12)" y="2.432" font-size="7.02" fill="#3c3c3c" text-anchor="end">7 400,00</text>
<text transform="translate(602.90 327.00) scale(1 1.12)" y="2.432" font-size="7.02" fill="#3c3c3c" text-anchor="end">0%</text>
<text transform="translate(610.80 327.00) scale(1 1.12)" y="2.432" font-size="7.02" fill="#3c3c3c" text-anchor="start">France</text>
<text transform="translate(706.60 327.00) scale(1 1.12)" y="2.432" font-size="7.02" fill="#3c3c3c" text-anchor="start">Pays de la Loire</text>
<text transform="translate(801.80 327.00) scale(1 1.12)" y="2.432" font-size="7.02" fill="#3c3c3c" text-anchor="start">Loire-Atlantique</text>
<text transform="translate(971.00 327.00) scale(1 1.12)" y="2.432" font-size="7.02" fill="#3c3c3c" text-anchor="end">Ouvert</text>
<text transform="translate(117.90 342.55) scale(1 1.12)" y="2.391" font-size="6.9" fill="#2e3d72" text-anchor="start">PJ1903-0014</text>
<text transform="translate(176.00 342.55) scale(1 1.12)" y="2.432" font-size="7.02" fill="#3c3c3c" text-anchor="start">PJ1903-0014</text>
<text transform="translate(260.60 342.55) scale(1 1.12)" y="2.432" font-size="7.02" fill="#2e3d72" text-anchor="start">SARL GTH</text>
<text transform="translate(329.50 342.55) scale(1 1.12)" y="2.432" font-size="7.02" fill="#3c3c3c" text-anchor="middle">01/03/2019</text>
<text transform="translate(387.00 342.55) scale(1 1.12)" y="2.432" font-size="7.02" fill="#3c3c3c" text-anchor="middle">16/08/2019</text>
<text transform="translate(419.70 342.55) scale(1 1.12)" y="2.432" font-size="7.02" fill="#3c3c3c" text-anchor="start">Contacts projet</text>
<text transform="translate(508.50 342.55) scale(1 1.12)" y="2.432" font-size="7.02" fill="#3c3c3c" text-anchor="middle">Proposition</text>
<text transform="translate(573.30 342.55) scale(1 1.12)" y="2.432" font-size="7.02" fill="#3c3c3c" text-anchor="end">7 400,00</text>
<text transform="translate(602.90 342.55) scale(1 1.12)" y="2.432" font-size="7.02" fill="#3c3c3c" text-anchor="end">0%</text>
<text transform="translate(610.80 342.55) scale(1 1.12)" y="2.432" font-size="7.02" fill="#3c3c3c" text-anchor="start">France</text>
<text transform="translate(706.60 342.55) scale(1 1.12)" y="2.432" font-size="7.02" fill="#3c3c3c" text-anchor="start">Île-de-France</text>
<text transform="translate(801.80 342.55) scale(1 1.12)" y="2.432" font-size="7.02" fill="#3c3c3c" text-anchor="start">Val-de-Marne</text>
<text transform="translate(971.00 342.55) scale(1 1.12)" y="2.432" font-size="7.02" fill="#3c3c3c" text-anchor="end">Ouvert</text>
<text transform="translate(117.90 358.20) scale(1 1.12)" y="2.391" font-size="6.9" fill="#2e3d72" text-anchor="start">PJ1903-0015</text>
<text transform="translate(176.00 358.20) scale(1 1.12)" y="2.432" font-size="7.02" fill="#3c3c3c" text-anchor="start">PJ1903-0015</text>
<text transform="translate(260.60 358.20) scale(1 1.12)" y="2.432" font-size="7.02" fill="#2e3d72" text-anchor="start">SARL GTH</text>
<text transform="translate(329.50 358.20) scale(1 1.12)" y="2.432" font-size="7.02" fill="#3c3c3c" text-anchor="middle">01/03/2019</text>
<text transform="translate(387.00 358.20) scale(1 1.12)" y="2.432" font-size="7.02" fill="#3c3c3c" text-anchor="middle">16/08/2019</text>
<text transform="translate(419.70 358.20) scale(1 1.12)" y="2.432" font-size="7.02" fill="#3c3c3c" text-anchor="start">Contacts projet</text>
<text transform="translate(508.50 358.20) scale(1 1.12)" y="2.432" font-size="7.02" fill="#3c3c3c" text-anchor="middle">Prospection</text>
<text transform="translate(573.30 358.20) scale(1 1.12)" y="2.432" font-size="7.02" fill="#3c3c3c" text-anchor="end">7 400,00</text>
<text transform="translate(602.90 358.20) scale(1 1.12)" y="2.432" font-size="7.02" fill="#3c3c3c" text-anchor="end">0%</text>
<text transform="translate(610.80 358.20) scale(1 1.12)" y="2.432" font-size="7.02" fill="#3c3c3c" text-anchor="start">France</text>
<text transform="translate(706.60 358.20) scale(1 1.12)" y="2.432" font-size="7.02" fill="#3c3c3c" text-anchor="start">Picardie</text>
<text transform="translate(801.80 358.20) scale(1 1.12)" y="2.432" font-size="7.02" fill="#3c3c3c" text-anchor="start">Aisne</text>
<text transform="translate(971.00 358.20) scale(1 1.12)" y="2.432" font-size="7.02" fill="#3c3c3c" text-anchor="end">Ouvert</text>
<text transform="translate(117.90 378.65) scale(1 1.12)" y="2.391" font-size="6.9" fill="#2e3d72" text-anchor="start">PJ1903-0016</text>
<text transform="translate(176.00 378.65) scale(1 1.12)" y="2.432" font-size="7.02" fill="#3c3c3c" text-anchor="start">Libellé</text>
<text transform="translate(260.60 378.65) scale(1 1.12)" y="2.432" font-size="7.02" fill="#2e3d72" text-anchor="start">SARL Ca...</text>
<text transform="translate(329.50 378.65) scale(1 1.12)" y="2.432" font-size="7.02" fill="#3c3c3c" text-anchor="middle">21/03/2019</text>
<text transform="translate(419.70 378.65) scale(1 1.12)" y="2.432" font-size="7.02" fill="#3c3c3c" text-anchor="start">Contacts projet</text>
<text transform="translate(508.50 378.65) scale(1 1.12)" y="2.432" font-size="7.02" fill="#3c3c3c" text-anchor="middle">Gagné</text>
<text transform="translate(610.80 378.65) scale(1 1.12)" y="2.432" font-size="7.02" fill="#3c3c3c" text-anchor="start">Maroc</text>
<text transform="translate(706.60 378.65) scale(1 1.12)" y="2.432" font-size="7.02" fill="#3c3c3c" text-anchor="start">Guelmim-Es Smara</text>
<text transform="translate(801.80 378.65) scale(1 1.12)" y="2.432" font-size="7.02" fill="#3c3c3c" text-anchor="start">Province de Guelmim</text>
<text transform="translate(897.10 373.90) scale(1 1.12)" y="2.432" font-size="7.02" fill="#3c3c3c" text-anchor="start">Avenu 3</text>
<text transform="translate(897.10 383.20) scale(1 1.12)" y="2.432" font-size="7.02" fill="#3c3c3c" text-anchor="start">mars</text>
<text transform="translate(971.00 378.65) scale(1 1.12)" y="2.432" font-size="7.02" fill="#3c3c3c" text-anchor="end">Ouvert</text>
<text transform="translate(109.60 398.80) scale(1 1.12)" y="2.432" font-size="7.02" fill="#6a3aa0" text-anchor="start">Total</text>
<text transform="translate(573.30 398.80) scale(1 1.12)" y="2.432" font-size="7.02" fill="#6a3aa0" text-anchor="end">87 160,00</text>
</svg>
</body></html>
